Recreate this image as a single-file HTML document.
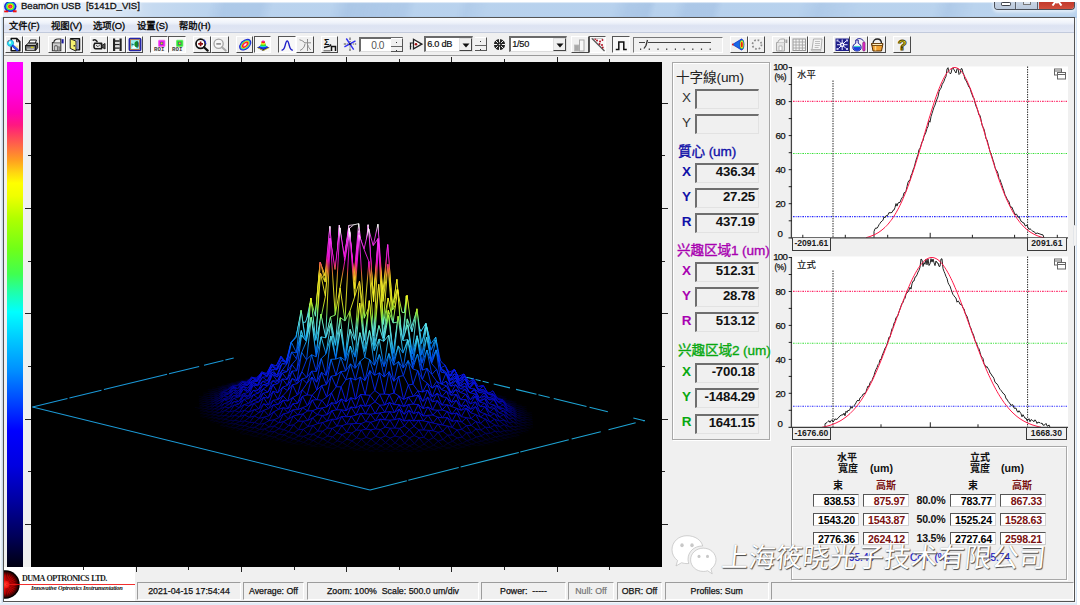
<!DOCTYPE html><html lang="zh"><head><meta charset="utf-8"><title>BeamOn USB [5141D_VIS]</title><style>
*{box-sizing:border-box;margin:0;padding:0}
html,body{width:1080px;height:605px;overflow:hidden;background:#fff}
body{position:relative;font-family:"Liberation Sans","Noto Sans CJK SC",sans-serif;font-size:10px;color:#000;line-height:1}
.a{position:absolute}
.t{position:absolute;white-space:nowrap;line-height:1}
#title{left:2.5px;top:1.7px;width:1074.5px;height:16.3px;background:linear-gradient(180deg,rgba(255,255,255,0.75) 0,rgba(255,255,255,0) 1.6px,rgba(255,255,255,0) 13.5px,rgba(120,150,190,0.18) 16.3px),linear-gradient(105deg,rgba(130,165,210,0) 200px,rgba(130,165,210,0.22) 215px,rgba(130,165,210,0.22) 250px,rgba(130,165,210,0) 262px,rgba(130,165,210,0) 318px,rgba(130,165,210,0.25) 335px,rgba(130,165,210,0.18) 390px,rgba(130,165,210,0) 400px,rgba(130,165,210,0) 440px,rgba(130,165,210,0.15) 450px,rgba(130,165,210,0) 470px,rgba(130,165,210,0) 590px,rgba(130,165,210,0.2) 605px,rgba(130,165,210,0.25) 625px,rgba(130,165,210,0) 632px,rgba(130,165,210,0) 650px,rgba(130,165,210,0.22) 662px,rgba(130,165,210,0.22) 688px,rgba(130,165,210,0) 696px,rgba(130,165,210,0) 770px,rgba(130,165,210,0.18) 790px,rgba(130,165,210,0) 830px,rgba(130,165,210,0) 900px,rgba(130,165,210,0.2) 915px,rgba(130,165,210,0) 940px),linear-gradient(90deg,#e6eef8 0px,#dbe7f5 110px,#c6daf0 150px,#bad3ee 210px,#b7d1ed 700px,#bbd4ee 1074px)}
#frame{left:0;top:17px;width:1077px;height:588px;background:linear-gradient(90deg,#fdfeff 0,#e0eaf5 1.6px,#c2d3e5 3px,#f3f7fc 3.2px);border-right:1px solid #d5e4f4;border-bottom:2px solid #e2ecf7}
#win{left:3px;top:17px;width:1072px;height:585px;background:#f0f0f0;border:1px solid #545454}
#menu{left:4px;top:18px;width:1070px;height:15px;background:linear-gradient(180deg,#fbfcfe 0%,#eef2fa 35%,#dde3f2 55%,#dfe5f3 80%,#e4e9f5 100%);border-bottom:1px solid #c2cadc}
#menu span{position:absolute;top:2.8px;font-size:9.35px;line-height:11px;white-space:nowrap;color:#000;-webkit-text-stroke:0.3px #000}
#tb{left:4px;top:33px;width:1070px;height:23px;background:#f0f0f0;border-bottom:1px solid #9a9a9a}
.btn{position:absolute;top:36px;height:17px;width:18px;border-right:1px solid #4a4a4a;border-bottom:1px solid #4a4a4a;border-left:1px solid #fff;border-top:1px solid #fff}
.btn.dn{border-left:1px solid #555;border-top:1px solid #555;border-right:1px solid #fff;border-bottom:1px solid #fff;background:#f8f8f8}
.btn svg{position:absolute;left:0;top:0}
.sunk{position:absolute;background:#fff;border-top:1px solid #6a6a6a;border-left:1px solid #6a6a6a;border-right:1px solid #dcdcdc;border-bottom:1px solid #dcdcdc}
#plot{left:31px;top:62px;width:631px;height:505px;background:#000}
#cbar{left:7px;top:62px;width:16px;height:505px;background:linear-gradient(180deg,#ff00ff 0%,#ff00e0 6%,#ff00b4 10%,#ff1880 12.5%,#ff4060 14.5%,#ff7040 17%,#ffa020 19.5%,#ffd810 22%,#ffff00 24%,#f0ff00 26.5%,#b0ff00 31%,#70ff18 37%,#40ff50 42%,#20ffa8 45.5%,#00ffff 49.5%,#00c8ff 55%,#0090ff 61%,#0048ff 67%,#0000ff 73%,#0000e0 80%,#0000a0 87%,#000058 94%,#000010 100%)}
.tk{position:absolute;background:#222}
.grp{position:absolute;border:1px solid #a8a8a8;box-shadow:1px 1px 0 #fff, inset 1px 1px 0 #fff}
.fld{position:absolute;left:695px;width:64px;height:20px;margin-top:-1px;border-top:2px solid #6e6e6e;border-left:2px solid #6e6e6e;border-right:1px solid #e2e2e2;border-bottom:1px solid #e2e2e2;background:#f0f0f0;font-weight:bold;font-size:13.2px;line-height:14px;text-align:right;padding-right:3px;color:#111;letter-spacing:-0.2px}
.lab{position:absolute;font-size:13.5px;line-height:16px;width:14px;text-align:center;left:679.5px;margin-top:-1.5px}
.hd{position:absolute;left:676px;font-size:13.6px;line-height:16px;white-space:nowrap;letter-spacing:-0.1px}
.vb{position:absolute;height:13px;width:46px;background:#fff;border-top:1px solid #555;border-left:1px solid #555;border-right:1px solid #cfcfcf;border-bottom:1px solid #cfcfcf;font-weight:bold;font-size:10.6px;line-height:12px;text-align:right;padding-right:3px;letter-spacing:-0.2px}
.pc{position:absolute;font-weight:bold;font-size:10.6px;line-height:12px;width:40px;text-align:center;left:911px;margin-top:1px;letter-spacing:-0.2px;color:#111}
.sb{position:absolute;top:582.2px;height:17.8px;border-top:1px solid #9c9c9c;border-left:1px solid #9c9c9c;border-right:1px solid #fff;border-bottom:1px solid #fff;font-size:8.8px;line-height:17px;text-align:center;white-space:nowrap;color:#111;-webkit-text-stroke:0.25px #111}
.xl{position:absolute;height:12.6px;border:1px solid #3a3a3a;border-top:none;background:#f0f0f0;font-weight:bold;font-size:8.6px;line-height:10.6px;text-align:center;color:#1a1a1a}
</style></head><body>
<div id="frame" class="a"></div>
<div id="title" class="a"></div>
<svg class="a" style="left:4px;top:1.5px" width="13" height="11" viewBox="0 0 13 11"><ellipse cx="6.3" cy="4.6" rx="6.2" ry="5.4" fill="#1c28d8"/><ellipse cx="6.3" cy="4.4" rx="4.6" ry="4.1" fill="#20d8d0"/><ellipse cx="6.3" cy="4.4" rx="3.9" ry="3.5" fill="#40e830"/><ellipse cx="6.3" cy="4.5" rx="3" ry="2.7" fill="#f8e818"/><ellipse cx="6.3" cy="4.6" rx="2.2" ry="2" fill="#f83018"/><ellipse cx="6.5" cy="4.8" rx="1.1" ry="1" fill="#f020c0"/><rect x="0.2" y="8.6" width="4" height="1.7" fill="#f01010"/><rect x="9" y="8.3" width="3.6" height="2" fill="#f01010"/></svg>
<div class="t" style="left:21px;top:0.4px;font-size:9.6px;line-height:12px;letter-spacing:-0.05px;color:#111;-webkit-text-stroke:0.3px #111;text-shadow:0 0 3px #fff,0 0 5px #fff">BeamOn USB&nbsp; [5141D_VIS]</div>
<div class="a" style="left:994px;top:1.5px;width:81px;height:8.5px;border:1px solid #4a4f58;border-top:none;border-radius:0 0 4px 4px;overflow:hidden;background:#c9d6e6;box-shadow:0 1px 3px 1.5px rgba(255,255,255,0.55)"><div class="a" style="left:0;top:0;width:21px;height:10px;background:linear-gradient(180deg,#c8d4e4,#b4c4d8);border-right:1px solid #5a5f68"></div><div class="a" style="left:22px;top:0;width:21px;height:10px;background:linear-gradient(180deg,#c8d4e4,#b4c4d8);border-right:1px solid #5a5f68"></div><div class="a" style="left:44px;top:0;width:36px;height:10px;background:linear-gradient(180deg,#c23a2c,#cf4c3a 60%,#d86c58)"></div><div class="a" style="left:6px;top:0.8px;width:9.5px;height:3.6px;border:1px solid #3c4048;background:#fff;border-radius:1.2px"></div><div class="a" style="left:28px;top:-4px;width:8px;height:7px;border:1px solid #777;background:#dfe7f1"></div><svg class="a" style="left:56px;top:-2px" width="12" height="6" viewBox="0 0 12 6"><path d="M1.5 5.5L5 1M10.5 5.5L7 1M4 0L6 2.5L8 0" stroke="#fff" stroke-width="2" fill="none"/></svg></div>
<div id="win" class="a"></div>
<div class="a" style="left:1073.3px;top:224.5px;width:3.6px;height:21.5px;background:#f3f3f3;border:1px solid #e3e6ea;border-radius:1.5px"></div>
<div id="menu" class="a"><span style="left:5px">文件(F)</span><span style="left:47px">视图(V)</span><span style="left:89px">选项(O)</span><span style="left:133px">设置(S)</span><span style="left:175px">帮助(H)</span></div>
<div id="tb" class="a"></div>
<div class="btn" style="left:5.0px;width:17.6px"><svg width="16" height="15" viewBox="0 0 16 15"><path d="M5.2 1.6h5.6l3 3v9.2h-8.6z" fill="#fbfbf4" stroke="#111" stroke-width="1.5" stroke-linejoin="round"/><path d="M10.5 1.8v3h3" fill="none" stroke="#222" stroke-width="0.9"/><rect x="9.5" y="8.5" width="3" height="4" fill="#f0eaa0"/><circle cx="4.5" cy="6.2" r="3.1" fill="#30e8f0" stroke="#18a8d8" stroke-width="0.9"/><path d="M1.6 5.2a3 3 0 0 1 1.5-2" stroke="#e04040" stroke-width="0.7" fill="none"/><ellipse cx="4" cy="5.6" rx="1" ry="1.5" fill="#d8ffff"/><path d="M6.9 8.8l4.5 4.2" stroke="#1c3ce0" stroke-width="2.5" stroke-linecap="round"/><path d="M7.5 9.1l3.6 3.4" stroke="#40a0f0" stroke-width="0.7" stroke-linecap="round"/></svg></div><div class="btn" style="left:22.9px;width:17.6px"><svg width="16" height="15" viewBox="0 0 16 15"><path d="M4.6 6.2l1.5-3.2h6.3l-1.1 3.2z" fill="#fff" stroke="#1a1a1a" stroke-width="1"/><path d="M1.6 8.6l2.8-2.5h9.2l-2 2.5z" fill="#b4b4b4" stroke="#1a1a1a" stroke-width="1" stroke-linejoin="round"/><path d="M1.6 8.6h10v4.6h-10z" fill="#808080" stroke="#1a1a1a" stroke-width="1.1" stroke-linejoin="round"/><path d="M11.6 8.6l2.1-2.5v4.7l-2.1 2.4z" fill="#5c5c5c" stroke="#1a1a1a" stroke-width="1" stroke-linejoin="round"/><path d="M3 12.2h7" stroke="#d8d8d8" stroke-width="1.1"/><rect x="6.8" y="9.7" width="2.8" height="1.3" fill="#d0c818"/></svg></div><div class="btn" style="left:48.0px;width:17.6px"><svg width="16" height="15" viewBox="0 0 16 15"><path d="M3.4 5.6h8.4v8.2h-8.4z" fill="#cfcfcf" stroke="#3a3a3a" stroke-width="1.1"/><path d="M4.8 5.6c0-2.2 1.7-3.6 4.2-3.6h2.8v3.6" fill="#f0f0f0" stroke="#2a2a2a" stroke-width="1.1"/><path d="M5.8 8.8h2.4v5h-2.4z" fill="#fff" stroke="#444" stroke-width="0.9"/><path d="M9.2 9.8h1.4v4h-1.4z" fill="#eee" stroke="#555" stroke-width="0.7"/><rect x="12.6" y="2.2" width="2" height="4.2" fill="#1c1ca0"/></svg></div><div class="btn" style="left:65.7px;width:17.6px"><svg width="16" height="15" viewBox="0 0 16 15"><path d="M3.2 1.8h9.3v11h-4" fill="#e8e8e8" stroke="#111" stroke-width="1.5" stroke-linejoin="round"/><path d="M9.5 3v9.5h2v-9.5z" fill="#8088b8"/><path d="M3.2 1.8l5.8 2.3v10l-5.8-2.7z" fill="#f4f070" stroke="#222" stroke-width="1" stroke-linejoin="round"/><rect x="6.6" y="8" width="1.5" height="1.5" fill="#333"/></svg></div><div class="btn" style="left:90.2px;width:17.6px"><svg width="16" height="15" viewBox="0 0 16 15"><path d="M1.8 3.6c1.6-1.6 3.8-.6 4.6 1.6" fill="none" stroke="#222" stroke-width="1.5"/><path d="M3.8 6.2h6.8v5.5h-6c-1.6 0-2.4-2.6-.8-5.5z" fill="#e4e4e4" stroke="#1a1a1a" stroke-width="1.6" stroke-linejoin="round"/><path d="M5 8.2l2 1.5 2.5-2.5" fill="none" stroke="#444" stroke-width="0.9"/><path d="M10.8 8.5l3.2-2v5.5l-3.2-2z" fill="#555" stroke="#222" stroke-width="1"/></svg></div><div class="btn" style="left:108.0px;width:17.6px"><svg width="16" height="15" viewBox="0 0 16 15"><rect x="4" y="1.5" width="2.2" height="12.5" fill="#222"/><rect x="10.5" y="1.5" width="2.2" height="12.5" fill="#222"/><path d="M6 4h4.5M6 7.5h4.5M6 11h4.5" stroke="#222" stroke-width="1.5"/><rect x="6.2" y="5" width="4.3" height="1.8" fill="#ddd"/><rect x="6.2" y="8.5" width="4.3" height="1.8" fill="#ddd"/></svg></div><div class="btn" style="left:125.7px;width:17.6px"><svg width="16" height="15" viewBox="0 0 16 15"><rect x="2.3" y="1.6" width="11.4" height="12" rx="1" fill="#98eef0" stroke="#2424a8" stroke-width="1.5"/><rect x="3.4" y="2.7" width="9.2" height="9.8" fill="none" stroke="#c8581c" stroke-width="0.7"/><path d="M4.3 11.5l2.7-3.3 2.7 3.3z" fill="#fff"/><path d="M8 5l2.2-1.2c1.2 1.5 1.2 5.5 0 7l-2.2-1.2c-.8-1.2-.8-3.4 0-4.6z" fill="#148c28"/><path d="M4.5 6.2l2.8 1.3-2.8 1.3z" fill="#1c7c7c"/><path d="M10.6 4.5c1 1.5 1 4.5 0 6" stroke="#102060" stroke-width="0.8" fill="none"/></svg></div><div class="btn dn" style="left:150.0px;width:17.6px"><svg width="16" height="15" viewBox="0 0 16 15"><rect x="7" y="2.7" width="7.4" height="7.2" rx="1.2" fill="#f020f0" opacity="0.55"/><rect x="7.7" y="3.4" width="6" height="5.8" rx="0.6" fill="#f020f0"/><rect x="9.2" y="4.9" width="3" height="2.9" fill="#3c4c8c"/><rect x="9.8" y="5.5" width="1.8" height="1.7" fill="#f0c818"/><text x="3" y="14.3" font-family="'Liberation Mono',monospace" font-size="5.7" font-weight="bold" fill="#3a3a3a" letter-spacing="0.1">ROI</text></svg></div><div class="btn dn" style="left:168.3px;width:17.6px"><svg width="16" height="15" viewBox="0 0 16 15"><rect x="7" y="2.7" width="7.4" height="7.2" rx="1.2" fill="#30e830" opacity="0.55"/><rect x="7.7" y="3.4" width="6" height="5.8" rx="0.6" fill="#30e830"/><rect x="9.2" y="4.9" width="3" height="2.9" fill="#3c4c8c"/><rect x="9.8" y="5.5" width="1.8" height="1.7" fill="#f0c818"/><text x="3" y="14.3" font-family="'Liberation Mono',monospace" font-size="5.7" font-weight="bold" fill="#3a3a3a" letter-spacing="0.1">ROI</text></svg></div><div class="btn" style="left:193.3px;width:17.6px"><svg width="16" height="15" viewBox="0 0 16 15"><circle cx="6.6" cy="6.8" r="4.6" fill="#fff" stroke="#111" stroke-width="1.7"/><path d="M10 10.2l3.7 3.4" stroke="#111" stroke-width="2.2" stroke-linecap="round"/><path d="M4.2 6.8h4.8M6.6 4.4v4.8" stroke="#8c1010" stroke-width="1.7"/><path d="M9.8 2.8a5.4 5.4 0 0 1 2.2 4.4" stroke="#2430d0" stroke-width="1.1" fill="none"/></svg></div><div class="btn" style="left:211.0px;width:17.6px"><svg width="16" height="15" viewBox="0 0 16 15"><circle cx="6.6" cy="6.8" r="4.6" fill="#f6f6f6" stroke="#a4a4a4" stroke-width="1.3"/><path d="M10 10.2l3.7 3.4" stroke="#ababab" stroke-width="2" stroke-linecap="round"/><path d="M4.3 6.9h4.6" stroke="#8a8a8a" stroke-width="1.6"/></svg></div><div class="btn" style="left:235.5px;width:17.6px"><svg width="16" height="15" viewBox="0 0 16 15"><g transform="rotate(-42 8.2 7.7)"><ellipse cx="8.2" cy="7.7" rx="7" ry="4.7" fill="#1c24d0"/><ellipse cx="8.2" cy="7.7" rx="5.9" ry="3.8" fill="#28b0f0"/><ellipse cx="8.2" cy="7.7" rx="5.2" ry="3.2" fill="#50e050"/><ellipse cx="8.2" cy="7.7" rx="4.6" ry="2.7" fill="#f8e020"/><ellipse cx="8.2" cy="7.7" rx="3.9" ry="2.2" fill="#f82020"/><ellipse cx="8.2" cy="7.7" rx="2.6" ry="1.2" fill="#ff60c0"/><ellipse cx="8.2" cy="7.7" rx="1.5" ry="0.6" fill="#fff"/></g></svg></div><div class="btn dn" style="left:253.5px;width:17.6px"><svg width="16" height="15" viewBox="0 0 16 15"><path d="M2 10.6l6-2.6 6.5 2.6-6.5 3.3z" fill="#101070"/><path d="M3 10.8l5.5 2.6 5.5-2.7" stroke="#d8c820" stroke-width="0.8" fill="none"/><path d="M3.2 10.3c2-.8 2.8-1.8 3.3-3.5h3.4c.5 1.7 1.5 2.7 3.5 3.5l-5 2z" fill="#1830e8"/><path d="M4.6 9.4c1-.8 1.4-1.6 1.8-3.2h3.6c.4 1.6.8 2.4 1.8 3.2-2 1-5.2 1-7.2 0z" fill="#20d8d8"/><path d="M5.2 8.4c.6-.8.9-1.5 1.1-2.6h3.8c.2 1.1.5 1.8 1.1 2.6-1.6.8-4.4.8-6 0z" fill="#30e030"/><path d="M5.8 7.2c.4-.7.6-1.3.7-2.2h3.4c.1.9.3 1.5.7 2.2-1.3.6-3.5.6-4.8 0z" fill="#f4ec20"/><path d="M6.3 5.8c.2-.6.3-1.1.4-1.8h3c.1.7.2 1.2.4 1.8-1 .5-2.8.5-3.8 0z" fill="#f42020"/><path d="M6.7 4.2c0-1 3-1 3 0-.8.6-2.2.6-3 0z" fill="#f030d0"/></svg></div><div class="btn dn" style="left:278.0px;width:17.6px"><svg width="16" height="15" viewBox="0 0 16 15"><path d="M2.6 13.2c2.3 0 2.8-1.6 3.5-4.6.6-2.6 1.1-4.6 2.1-4.6s1.5 2 2.1 4.6c.7 3 1.2 4.6 3.5 4.6" fill="none" stroke="#2020c8" stroke-width="1.4"/></svg></div><div class="btn" style="left:296.0px;width:17.6px"><svg width="16" height="15" viewBox="0 0 16 15"><path d="M10.5 2v12M7.5 5.8h6.5M2.5 2.8c2.5.5 4.5 1.8 5.5 3.5M3 13.5c3-1.5 4.5-3.5 5-6.5M13.8 13c-1.5-1.5-2.5-3-3-5" fill="none" stroke="#8c8c8c" stroke-width="1"/></svg></div><div class="btn" style="left:320.6px;width:17.6px"><svg width="16" height="15" viewBox="0 0 16 15"><text x="2" y="8" font-family="'Liberation Sans',sans-serif" font-size="9" font-weight="bold" fill="#111">Σ</text><path d="M2 10.5l6-1.5 1-1.5" stroke="#111" stroke-width="1.4" fill="none"/><path d="M9.5 14v-4.5h4v4.5" stroke="#111" stroke-width="1.5" fill="none"/><path d="M1.5 13.8h7" stroke="#555" stroke-width="1"/></svg></div><div class="btn" style="left:571.0px;width:17.6px"><svg width="16" height="15" viewBox="0 0 16 15"><rect x="2.5" y="8" width="4.5" height="6" fill="#a8a8a8" stroke="#b8b8b8" stroke-width="0.8"/><rect x="7.5" y="3" width="4.5" height="11" fill="#f8f8f8" stroke="#aaa" stroke-width="1"/></svg></div><div class="btn dn" style="left:588.6px;width:17.6px"><svg width="16" height="15" viewBox="0 0 16 15"><path d="M2 1.5l12.5 12.5" stroke="#555" stroke-width="1.2"/><path d="M1.5 1.5h12" stroke="#777" stroke-width="0.8" stroke-dasharray="1 1"/><g fill="#b01020"><circle cx="7" cy="3.5" r="1"/><circle cx="10" cy="4.5" r="1"/><circle cx="12.5" cy="3" r="0.9"/><circle cx="9.5" cy="7" r="1"/><circle cx="12" cy="8" r="1"/><circle cx="12.8" cy="10.5" r="0.9"/><circle cx="5.2" cy="2.2" r="0.8"/></g></svg></div><div class="btn dn" style="left:612.4px;width:17.6px"><svg width="16" height="15" viewBox="0 0 16 15"><path d="M2.8 12.6h3v-7.6h5v7.6h3" fill="none" stroke="#111" stroke-width="1.5"/></svg></div><div class="btn" style="left:730.0px;width:17.6px"><svg width="16" height="15" viewBox="0 0 16 15"><path d="M1.5 7.5l9-5.5c2.5 1 2.5 10 0 11z" fill="#1868e8" stroke="#1030c0" stroke-width="0.8"/><ellipse cx="10.8" cy="7.5" rx="2.6" ry="5.5" fill="#2040d0"/><ellipse cx="10.8" cy="7.5" rx="2" ry="4.6" fill="#38d048"/><ellipse cx="10.8" cy="7.5" rx="1.6" ry="3.8" fill="#f8e020"/><ellipse cx="10.8" cy="7.5" rx="1" ry="2.8" fill="#f02010"/><circle cx="1.8" cy="7.5" r="0.9" fill="#e02020"/></svg></div><div class="btn" style="left:747.6px;width:17.6px"><svg width="16" height="15" viewBox="0 0 16 15"><circle cx="8" cy="7.5" r="4.5" fill="none" stroke="#8a8a8a" stroke-width="1.7" stroke-dasharray="1.7 1.850"/></svg></div><div class="btn" style="left:772.4px;width:17.6px"><svg width="16" height="15" viewBox="0 0 16 15"><path d="M3.5 5.5h8v8.5h-8z" fill="#e4e4e4" stroke="#a8a8a8" stroke-width="1"/><path d="M5 5.5c0-2 1.5-3.5 4-3.5h2.5v3.5" fill="#f0f0f0" stroke="#a8a8a8" stroke-width="1"/><path d="M6 9h3v4.5h-3z" fill="#fff" stroke="#b0b0b0" stroke-width="0.9"/><rect x="12.5" y="2.5" width="1.8" height="3.5" fill="#a0a0a0"/></svg></div><div class="btn" style="left:790.0px;width:17.6px"><svg width="16" height="15" viewBox="0 0 16 15"><rect x="2" y="2" width="12.5" height="11.5" fill="#f4f4f4" stroke="#9a9a9a" stroke-width="1"/><path d="M2 5h12.5M2 8h12.5M2 11h12.5M5 2v11.5M8.2 2v11.5M11.4 2v11.5" stroke="#a4a4a4" stroke-width="0.9"/></svg></div><div class="btn" style="left:807.8px;width:17.6px"><svg width="16" height="15" viewBox="0 0 16 15"><path d="M4.5 2h8.5l-1 10.5h-9z" fill="#f4f4f4" stroke="#b0b0b0" stroke-width="1"/><path d="M2 12.5h9.5l.5 1.5h-9z" fill="#e0e0e0" stroke="#b0b0b0" stroke-width="0.8"/><path d="M6 4.5h5M6 6.5h5M5.8 8.5h5M5.6 10.5h4" stroke="#b8b8b8" stroke-width="0.9"/></svg></div><div class="btn" style="left:832.5px;width:17.6px"><svg width="16" height="15" viewBox="0 0 16 15"><rect x="1.5" y="1.5" width="13.5" height="12.5" fill="#20208c"/><g stroke="#e8e8ff" stroke-width="1" fill="none"><path d="M8.2 2.5v10.5M3 7.7h10.5M4.5 4l7.5 7.5M12 4l-7.5 7.5"/></g><circle cx="8.2" cy="7.7" r="2.2" fill="#fff"/><circle cx="8.2" cy="7.7" r="1" fill="#4040b0"/><g fill="#c8c8f0"><rect x="2.5" y="2.5" width="2" height="2"/><rect x="12" y="2.5" width="2" height="2"/><rect x="2.5" y="11" width="2" height="2"/><rect x="12" y="11" width="2" height="2"/></g></svg></div><div class="btn" style="left:850.3px;width:17.6px"><svg width="16" height="15" viewBox="0 0 16 15"><path d="M5.5 2.5c2-1.5 5-1.5 7.5 2" fill="none" stroke="#3030a0" stroke-width="1"/><path d="M4.8 3h2.4v3.2c2 1 3 2.5 3 4.3 0 2-1.8 3.5-4.2 3.5s-4.2-1.5-4.2-3.5c0-1.8 1-3.3 3-4.3z" fill="#f4f4ff" stroke="#181890" stroke-width="1"/><path d="M2.2 9.5h7.6c.3 2.5-1.3 4.2-3.8 4.2s-4.1-1.7-3.8-4.2z" fill="#1840e0"/><path d="M3 9.5h6" stroke="#40d0c0" stroke-width="1.2"/><rect x="11.8" y="5" width="2.2" height="9" rx="1" fill="#f030d0" stroke="#701070" stroke-width="0.7"/></svg></div><div class="btn" style="left:868.2px;width:17.6px"><svg width="16" height="15" viewBox="0 0 16 15"><path d="M4 6.5c0-6 8.5-6 8.5 0" fill="none" stroke="#222" stroke-width="1.3"/><path d="M2.5 6.5h11.5l-1.5 7.5h-8.5z" fill="#f0a030" stroke="#5a3000" stroke-width="1"/><path d="M3 6.5h10.5v2h-10.5z" fill="#fff0c0" stroke="#5a3000" stroke-width="0.8"/><path d="M6.5 9v4.5" stroke="#ffd890" stroke-width="1.5"/></svg></div><div class="btn" style="left:893.3px;width:17.6px"><svg width="16" height="15" viewBox="0 0 16 15"><text x="8.3" y="13.3" text-anchor="middle" font-family="'Liberation Sans',sans-serif" font-size="15" font-weight="bold" fill="#e8d820" stroke="#4a4000" stroke-width="0.9">?</text></svg></div><svg class="a" style="left:343px;top:37px" width="14" height="15" viewBox="0 0 14 15"><path d="M7 0.5v13.5M0.8 7h12.4" stroke="#333" stroke-width="0.9" stroke-dasharray="2.5 1 1 1"/><path d="M3.3 1.5L10.7 12.6M1.4 9.8L12.5 3.8" stroke="#3030f0" stroke-width="1.4"/><rect x="6.2" y="6.2" width="1.6" height="1.6" fill="#111"/></svg><div class="sunk" style="left:359.2px;top:37px;width:43.6px;height:15.2px;border-top-width:2px;border-left-width:2px"></div><div class="t" style="left:362px;top:40.8px;width:22px;text-align:right;font-size:10.2px;color:#555;letter-spacing:-0.5px">0.0</div><div class="a" style="left:390.6px;top:37.6px;width:12px;height:14.4px;border-right:1px solid #555;border-bottom:1.3px solid #555;border-top:1px solid #fff;background:#f0f0f0"><div class="a" style="left:0;top:7px;width:11px;height:1.5px;background:#666"></div><div class="a" style="left:5px;top:3px;width:1.5px;height:1.5px;background:#333"></div><div class="a" style="left:5px;top:11px;width:1.5px;height:1.5px;background:#333"></div></div><svg class="a" style="left:409px;top:37px" width="14" height="15" viewBox="0 0 14 15"><path d="M4.5 2.3l8.3 4.8-8.3 4.8z" fill="#fff" stroke="#222" stroke-width="1.3"/><path d="M0.8 6h3.5M1.5 6v6.5M0.8 9.5h1.5" stroke="#222" stroke-width="1.2" fill="none"/><circle cx="7" cy="7.2" r="1.3" fill="#a01010"/></svg><div class="sunk" style="left:423.7px;top:36.3px;width:49px;height:15.8px;border-top-width:2px;border-left-width:2px"></div><div class="t" style="left:427.3px;top:40px;font-size:9.2px;color:#111;letter-spacing:-0.3px;-webkit-text-stroke:0.2px #111">6.0 dB</div><div class="a" style="left:459.0px;top:38px;width:12.5px;height:13px;background:#f0f0f0;border-right:1px solid #444;border-bottom:1px solid #444;border-left:1px solid #e0e0e0;border-top:1px solid #e0e0e0"><svg class="a" style="left:2px;top:3.5px" width="8" height="5" viewBox="0 0 8 5"><path d="M0.5 0.5h7l-3.5 4z" fill="#111"/></svg></div><div class="a" style="left:474.5px;top:36.8px;width:12px;height:14.4px;border-right:1px solid #555;border-bottom:1.3px solid #555;border-top:1px solid #fff;background:#f0f0f0"><div class="a" style="left:0;top:7px;width:11px;height:1.5px;background:#666"></div><div class="a" style="left:5px;top:3px;width:1.5px;height:1.5px;background:#333"></div><div class="a" style="left:5px;top:11px;width:1.5px;height:1.5px;background:#333"></div></div><svg class="a" style="left:492.5px;top:37.5px" width="13" height="13" viewBox="0 0 13 13"><circle cx="6.5" cy="6.5" r="5.6" fill="#222"/><g stroke="#f0f0f0" stroke-width="1"><path d="M6.5 0.5v12M0.5 6.5h12M2.3 2.3l8.4 8.4M10.7 2.3l-8.4 8.4"/></g><circle cx="6.5" cy="6.5" r="2.3" fill="#222"/><circle cx="6.5" cy="6.5" r="0.8" fill="#ddd"/></svg><div class="sunk" style="left:508.7px;top:36.3px;width:58px;height:15.8px;border-top-width:2px;border-left-width:2px"></div><div class="t" style="left:512.3px;top:40px;font-size:9.2px;color:#111;letter-spacing:-0.3px;-webkit-text-stroke:0.2px #111">1/50</div><div class="a" style="left:553.0px;top:38px;width:12.5px;height:13px;background:#f0f0f0;border-right:1px solid #444;border-bottom:1px solid #444;border-left:1px solid #e0e0e0;border-top:1px solid #e0e0e0"><svg class="a" style="left:2px;top:3.5px" width="8" height="5" viewBox="0 0 8 5"><path d="M0.5 0.5h7l-3.5 4z" fill="#111"/></svg></div><div class="a" style="left:632.5px;top:37px;width:90px;height:16px;border-top:1px solid #777;border-left:1px solid #777;border-right:1px solid #fff;border-bottom:1px solid #fff"></div><svg class="a" style="left:632px;top:37px" width="91" height="16" viewBox="0 0 91 16"><path d="M7 5.5h6M16 5.5h63" stroke="#444" stroke-width="1.2"/><path d="M15.5 3l-1.5 5.5-2 3" stroke="#333" stroke-width="1.3" fill="none"/><rect x="8.0" y="11.5" width="1.2" height="1.4" fill="#333"/><rect x="16.7" y="11.5" width="1.2" height="1.4" fill="#333"/><rect x="25.4" y="11.5" width="1.2" height="1.4" fill="#333"/><rect x="34.1" y="11.5" width="1.2" height="1.4" fill="#333"/><rect x="42.8" y="11.5" width="1.2" height="1.4" fill="#333"/><rect x="51.5" y="11.5" width="1.2" height="1.4" fill="#333"/><rect x="60.2" y="11.5" width="1.2" height="1.4" fill="#333"/><rect x="68.9" y="11.5" width="1.2" height="1.4" fill="#333"/><rect x="77.6" y="11.5" width="1.2" height="1.4" fill="#333"/></svg>
<div id="cbar" class="a"></div>
<div id="plot" class="a"></div>
<div class="tk" style="left:25px;top:102.5px;width:6px;height:1px"></div>
<div class="tk" style="left:662px;top:102.5px;width:6px;height:1px"></div>
<div class="tk" style="left:28px;top:155.2px;width:3px;height:1px"></div>
<div class="tk" style="left:662px;top:155.2px;width:3px;height:1px"></div>
<div class="tk" style="left:25px;top:207.9px;width:6px;height:1px"></div>
<div class="tk" style="left:662px;top:207.9px;width:6px;height:1px"></div>
<div class="tk" style="left:28px;top:260.6px;width:3px;height:1px"></div>
<div class="tk" style="left:662px;top:260.6px;width:3px;height:1px"></div>
<div class="tk" style="left:25px;top:313.3px;width:6px;height:1px"></div>
<div class="tk" style="left:662px;top:313.3px;width:6px;height:1px"></div>
<div class="tk" style="left:28px;top:366.0px;width:3px;height:1px"></div>
<div class="tk" style="left:662px;top:366.0px;width:3px;height:1px"></div>
<div class="tk" style="left:25px;top:418.7px;width:6px;height:1px"></div>
<div class="tk" style="left:662px;top:418.7px;width:6px;height:1px"></div>
<div class="tk" style="left:28px;top:471.4px;width:3px;height:1px"></div>
<div class="tk" style="left:662px;top:471.4px;width:3px;height:1px"></div>
<div class="tk" style="left:25px;top:524.1px;width:6px;height:1px"></div>
<div class="tk" style="left:662px;top:524.1px;width:6px;height:1px"></div>
<div class="tk" style="left:83.1px;top:59px;width:1px;height:3px"></div>
<div class="tk" style="left:83.1px;top:567px;width:1px;height:3px"></div>
<div class="tk" style="left:135.7px;top:57px;width:1px;height:5px"></div>
<div class="tk" style="left:135.7px;top:567px;width:1px;height:5px"></div>
<div class="tk" style="left:188.3px;top:59px;width:1px;height:3px"></div>
<div class="tk" style="left:188.3px;top:567px;width:1px;height:3px"></div>
<div class="tk" style="left:240.9px;top:57px;width:1px;height:5px"></div>
<div class="tk" style="left:240.9px;top:567px;width:1px;height:5px"></div>
<div class="tk" style="left:293.5px;top:59px;width:1px;height:3px"></div>
<div class="tk" style="left:293.5px;top:567px;width:1px;height:3px"></div>
<div class="tk" style="left:346.1px;top:57px;width:1px;height:5px"></div>
<div class="tk" style="left:346.1px;top:567px;width:1px;height:5px"></div>
<div class="tk" style="left:398.7px;top:59px;width:1px;height:3px"></div>
<div class="tk" style="left:398.7px;top:567px;width:1px;height:3px"></div>
<div class="tk" style="left:451.3px;top:57px;width:1px;height:5px"></div>
<div class="tk" style="left:451.3px;top:567px;width:1px;height:5px"></div>
<div class="tk" style="left:503.9px;top:59px;width:1px;height:3px"></div>
<div class="tk" style="left:503.9px;top:567px;width:1px;height:3px"></div>
<div class="tk" style="left:556.5px;top:57px;width:1px;height:5px"></div>
<div class="tk" style="left:556.5px;top:567px;width:1px;height:5px"></div>
<div class="tk" style="left:609.1px;top:59px;width:1px;height:3px"></div>
<div class="tk" style="left:609.1px;top:567px;width:1px;height:3px"></div>
<svg class="a" style="left:0;top:0" width="1080" height="605" viewBox="0 0 1080 605"><clipPath id="pc"><rect x="31" y="62" width="631" height="505"/></clipPath><g clip-path="url(#pc)">
<defs><linearGradient id="mg" gradientUnits="userSpaceOnUse" x1="0" y1="-190" x2="0" y2="0"><stop offset="0.000" stop-color="#ffffff"/><stop offset="0.015" stop-color="#ffffff"/><stop offset="0.060" stop-color="#ff3cff"/><stop offset="0.170" stop-color="#ff14e6"/><stop offset="0.195" stop-color="#ff2896"/><stop offset="0.220" stop-color="#ff6e46"/><stop offset="0.250" stop-color="#ffb428"/><stop offset="0.280" stop-color="#fff028"/><stop offset="0.375" stop-color="#faff28"/><stop offset="0.410" stop-color="#d7ff28"/><stop offset="0.445" stop-color="#96ff50"/><stop offset="0.480" stop-color="#6effc8"/><stop offset="0.525" stop-color="#60f0fa"/><stop offset="0.580" stop-color="#28c8ff"/><stop offset="0.630" stop-color="#007cff"/><stop offset="0.690" stop-color="#003cff"/><stop offset="0.800" stop-color="#0818fa"/><stop offset="0.880" stop-color="#060cde"/><stop offset="0.940" stop-color="#0204a5"/><stop offset="0.970" stop-color="#000069"/><stop offset="0.992" stop-color="#00001e"/><stop offset="1.000" stop-color="#000000"/></linearGradient></defs><g fill="#000" stroke="url(#mg)" stroke-width="0.85" stroke-linejoin="round"><path transform="translate(0 373.1)" d="M293 -1L297.9 -0.3 302.6 -1.1 307.5 -0.5 312.2 -1.2 317.1 -0.6 321.8 -1.2 326.7 -0.6 331.4 -1.4 336.3 -0.7 341 -1.3 345.9 -0.7 350.6 -1.3 355.5 -0.6 360.2 -1.1 365.1 -0.4 369.8 -0.9 374.7 -0.2 379.4 -0.7 379.4 1.5 293 1.5z"/><path transform="translate(0 374.3)" d="M288.3 -1.3L293.2 -0.4 297.9 -1.5 302.8 -0.8 307.5 -1.7 312.4 -1.1 317.1 -1.8 322 -1.6 326.7 -1.8 331.6 -1.4 336.3 -1.9 341.2 -1.4 345.9 -1.9 350.8 -1.2 355.5 -1.9 360.4 -0.8 365.1 -1.6 370 -0.6 374.7 -1.4 379.6 -0.4 384.3 -1.1 384.3 1.5 288.3 1.5z"/><path transform="translate(0 375.5)" d="M274 -1.1L278.9 -0.8 283.6 -1.4 288.5 -1.5 293.2 -1.7 298.1 -2.3 302.8 -2 307.7 -2.9 312.4 -2.3 317.3 -3.3 322 -2.8 326.9 -3.9 331.6 -2.6 336.5 -4.5 341.2 -2.6 346.1 -3.9 350.8 -2.4 355.7 -3.4 360.4 -2 365.3 -2.5 370 -1.8 374.9 -1.5 379.6 -1.6 384.5 -1 389.2 -1.4 394.1 -0.6 398.8 -0.9 398.8 1.5 274 1.5z"/><path transform="translate(0 376.8)" d="M259.7 -1.1L264.6 -0.2 269.3 -1.3 274.2 -0.8 278.9 -2 283.8 -2.1 288.5 -2.7 293.4 -2.5 298.1 -3.5 303 -3.5 307.7 -4.1 312.6 -4.1 317.3 -4.5 322.2 -4.4 326.9 -5.2 331.8 -5.3 336.5 -5.7 341.4 -4.8 346.1 -5.1 351 -4.5 355.7 -4.6 360.6 -4.6 365.3 -3.8 370.2 -3.2 374.9 -2.7 379.8 -2.1 384.5 -2.2 389.4 -1.2 394.1 -1.9 399 -0.6 403.7 -1.4 408.6 -0.3 413.3 -0.8 413.3 1.5 259.7 1.5z"/><path transform="translate(0 378)" d="M255 -1L259.9 -0.7 264.6 -1.4 269.5 -1.8 274.2 -2 279.1 -3.2 283.8 -3.3 288.7 -4.5 293.4 -3.7 298.3 -5.6 303 -4.7 307.9 -6.4 312.6 -5.3 317.5 -8.1 322.2 -5.6 327.1 -8.1 331.8 -6.5 336.7 -8.3 341.4 -6 346.3 -8.7 351 -5.7 355.9 -7.9 360.6 -5.8 365.5 -7.7 370.2 -4.4 375.1 -6.3 379.8 -3.4 384.7 -4.9 389.4 -2.4 394.3 -2.9 399 -1.9 403.9 -1.5 408.6 -1.5 413.5 -0.8 418.2 -1 418.2 1.5 255 1.5z"/><path transform="translate(0 379.2)" d="M250.3 -1.2L255.2 -0.7 259.9 -1.9 264.8 -2 269.5 -3 274.4 -3.1 279.1 -4.4 284 -4.2 288.7 -5.7 293.6 -5.2 298.3 -6.8 303.2 -6.2 307.9 -7.6 312.8 -7.1 317.5 -9.3 322.4 -8.7 327.1 -9.3 332 -8.8 336.7 -9.6 341.6 -8.9 346.3 -9.9 351.2 -8 355.9 -9.1 360.8 -8.1 365.5 -8.9 370.4 -7.6 375.1 -7.6 380 -7.1 384.7 -6.1 389.6 -4.9 394.3 -4.1 399.2 -3.6 403.9 -2.7 408.8 -1.8 413.5 -2 418.4 -0.8 423.1 -1.4 428 -0.3 432.7 -0.6 432.7 1.5 250.3 1.5z"/><path transform="translate(0 380.4)" d="M245.6 -1.2L250.5 -1.3 255.2 -1.9 260.1 -2.6 264.8 -3.3 269.7 -4.5 274.4 -4.3 279.3 -6.2 284 -5.4 288.9 -8.2 293.6 -6.4 298.5 -9.8 303.2 -7.4 308.1 -11.7 312.8 -8.3 317.7 -12.6 322.4 -9.9 327.3 -14.2 332 -10 336.9 -13.1 341.6 -10.1 346.5 -14 351.2 -9.2 356.1 -13.9 360.8 -9.3 365.7 -12.1 370.4 -8.8 375.3 -11.4 380 -8.4 384.9 -10.5 389.6 -6.1 394.5 -9.2 399.2 -4.8 404.1 -6.2 408.8 -3 413.7 -3.4 418.4 -2 423.3 -1.4 428 -1.5 432.9 -0.8 437.6 -0.8 437.6 1.5 245.6 1.5z"/><path transform="translate(0 381.7)" d="M240.9 -1.4L245.8 -1.2 250.5 -2.6 255.4 -2.4 260.1 -3.9 265 -4.1 269.7 -5.7 274.6 -5.2 279.3 -7.4 284.2 -7 288.9 -9.4 293.8 -8.8 298.5 -11 303.4 -10.4 308.1 -12.9 313 -11.6 317.7 -13.8 322.6 -13 327.3 -15.4 332.2 -12.2 336.9 -14.4 341.8 -13.4 346.5 -15.2 351.4 -12.8 356.1 -15.1 361 -12.9 365.7 -13.3 370.6 -12.7 375.3 -12.6 380.2 -11.7 384.9 -11.8 389.8 -8.8 394.5 -10.5 399.4 -7.9 404.1 -7.4 409 -5.6 413.7 -4.6 418.6 -3.5 423.3 -2.7 428.2 -1.4 432.9 -2 437.8 -0.5 442.5 -1.1 442.5 1.5 240.9 1.5z"/><path transform="translate(0 382.9)" d="M236.2 -1.3L241.1 -1.7 245.8 -2.4 250.7 -3.4 255.4 -3.7 260.3 -5 265 -5.3 269.9 -7.2 274.6 -6.4 279.5 -10 284.2 -8.3 289.1 -12.5 293.8 -10.1 298.7 -15.3 303.4 -11.7 308.3 -16.4 313 -12.8 317.9 -17.5 322.6 -14.2 327.5 -18.5 332.2 -13.5 337.1 -18.8 341.8 -14.6 346.7 -20.6 351.4 -14.1 356.3 -20.2 361 -14.2 365.9 -20.4 370.6 -14 375.5 -17 380.2 -13 385.1 -15.9 389.8 -10.1 394.7 -13.6 399.4 -9.1 404.3 -11.9 409 -6.8 413.9 -9.1 418.6 -4.7 423.5 -5.6 428.2 -2.6 433.1 -2.3 437.8 -1.7 442.7 -1.1 447.4 -1.1 447.4 1.5 236.2 1.5z"/><path transform="translate(0 384.1)" d="M231.5 -1.3L236.4 -1 241.1 -2.9 246 -2.5 250.7 -4.7 255.6 -4.1 260.3 -6.2 265.2 -5.9 269.9 -8.4 274.8 -8.8 279.5 -11.2 284.4 -10.6 289.1 -13.7 294 -12.3 298.7 -16.5 303.6 -15.4 308.3 -17.6 313.2 -15.6 317.9 -18.7 322.8 -16.6 327.5 -19.7 332.4 -17.5 337.1 -20.1 342 -17.6 346.7 -21.8 351.6 -18.1 356.3 -21.5 361.2 -18.2 365.9 -21.6 370.8 -18.5 375.5 -18.2 380.4 -14.8 385.1 -17.2 390 -15.3 394.7 -14.8 399.6 -12 404.3 -13.1 409.2 -10.5 413.9 -10.4 418.8 -8.4 423.5 -6.8 428.4 -5 433.1 -3.5 438 -2.7 442.7 -2.3 447.6 -0.8 452.3 -1.4 452.3 1.5 231.5 1.5z"/><path transform="translate(0 385.3)" d="M226.8 -1.1L231.7 -1.5 236.4 -2.3 241.3 -3.2 246 -3.7 250.9 -4.7 255.6 -5.3 260.5 -8 265.2 -7.1 270.1 -11.5 274.8 -10 279.7 -14.7 284.4 -11.9 289.3 -16.9 294 -13.5 298.9 -19.7 303.6 -16.6 308.5 -21.8 313.2 -16.9 318.1 -22.4 322.8 -17.8 327.7 -25.4 332.4 -18.7 337.3 -25.6 342 -18.9 346.9 -26.9 351.6 -19.3 356.5 -25.6 361.2 -19.5 366.1 -25.2 370.8 -19.7 375.7 -24.5 380.4 -16 385.3 -22 390 -16.6 394.9 -21.7 399.6 -13.3 404.5 -17.5 409.2 -11.8 414.1 -14.1 418.8 -9.6 423.7 -11.9 428.4 -6.2 433.3 -7.6 438 -3.9 442.9 -4 447.6 -2 452.5 -1.4 457.2 -1.3 462.1 -0.3 466.8 -0.6 466.8 1.5 226.8 1.5z"/><path transform="translate(0 386.5)" d="M222.1 -1.2L227 -1 231.7 -2.7 236.6 -2.3 241.3 -4.4 246.2 -3.9 250.9 -5.9 255.8 -6.9 260.5 -9.2 265.4 -9.5 270.1 -12.7 275 -12.7 279.7 -16 284.6 -14.3 289.3 -18.1 294.2 -16.4 298.9 -21 303.8 -19.6 308.5 -23 313.4 -20.1 318.1 -23.7 323 -22.2 327.7 -26.6 332.6 -21.4 337.3 -26.9 342.2 -22.8 346.9 -28.1 351.8 -24 356.5 -26.8 361.4 -23.8 366.1 -26.4 371 -22.7 375.7 -25.7 380.6 -22.4 385.3 -23.2 390.2 -18.1 394.9 -23 399.8 -17.2 404.5 -18.7 409.4 -14.7 414.1 -15.4 419 -12.1 423.7 -13.1 428.6 -9.1 433.3 -8.8 438.2 -7.6 442.9 -5.3 447.8 -3.4 452.5 -2.6 457.4 -1.1 462.1 -1.5 467 -0.2 471.7 -0.6 471.7 1.5 222.1 1.5z"/><path transform="translate(0 387.8)" d="M217.4 -1L222.3 -0.9 227 -2.2 231.9 -2.8 236.6 -3.5 241.5 -4.5 246.2 -5.1 251.1 -9.2 255.8 -8.1 260.7 -11.9 265.4 -10.8 270.3 -16.4 275 -13.9 279.9 -18.8 284.6 -15.5 289.5 -21.3 294.2 -17.6 299.1 -26.1 303.8 -20.8 308.7 -24.4 313.4 -21.3 318.3 -29.2 323 -23.4 327.9 -28.7 332.6 -22.7 337.5 -30 342.2 -24 347.1 -31.5 351.8 -25.2 356.7 -31.6 361.4 -25 366.3 -28.2 371 -23.9 375.9 -28.7 380.6 -23.6 385.5 -28.6 390.2 -19.3 395.1 -24.3 399.8 -18.5 404.7 -23.2 409.4 -15.9 414.3 -20.4 419 -13.3 423.9 -17.5 428.6 -10.3 433.5 -12.5 438.2 -8.8 443.1 -8.9 447.8 -4.6 452.7 -4.7 457.4 -2.3 462.3 -1.5 467 -1.4 471.9 -0.3 476.6 -0.6 476.6 1.5 217.4 1.5z"/><path transform="translate(0 389)" d="M212.7 -1L217.6 -0.4 222.3 -2.1 227.2 -1.8 231.9 -4 236.8 -3.8 241.5 -5.7 246.4 -7 251.1 -10.5 256 -10.5 260.7 -13.2 265.6 -12.1 270.3 -17.6 275.2 -15.2 279.9 -20 284.8 -18.8 289.5 -22.5 294.4 -20.1 299.1 -27.3 304 -21.2 308.7 -25.6 313.6 -25.3 318.3 -30.5 323.2 -25.1 327.9 -29.9 332.8 -28.1 337.5 -31.3 342.4 -26.4 347.1 -32.7 352 -27.5 356.7 -32.8 361.6 -27.7 366.3 -29.4 371.2 -27.3 375.9 -29.9 380.8 -25.1 385.5 -29.8 390.4 -22.6 395.1 -25.5 400 -22.6 404.7 -24.4 409.6 -18.7 414.3 -21.7 419.2 -18.4 423.9 -18.7 428.8 -14.2 433.5 -13.8 438.4 -10.9 443.1 -10.2 448 -8.4 452.7 -5.9 457.6 -3.8 462.3 -2.8 467.2 -1.1 471.9 -1.6 476.8 -0.2 476.8 1.5 212.7 1.5z"/><path transform="translate(0 390.2)" d="M208 -0.8L212.9 -0.3 217.6 -1.6 222.5 -2.2 227.2 -3 232.1 -3.6 236.8 -5 241.7 -7.8 246.4 -8.2 251.3 -12.1 256 -11.7 260.9 -16.8 265.6 -13.3 270.5 -20 275.2 -16.4 280.1 -21.8 284.8 -20 289.7 -25.1 294.4 -21.3 299.3 -30 304 -22.4 308.9 -32.1 313.6 -26.6 318.5 -32.1 323.2 -26.3 328.1 -36.8 332.8 -29.3 337.7 -37.7 342.4 -27.6 347.3 -35.4 352 -28.8 356.9 -37.7 361.6 -28.9 366.5 -34 371.2 -28.5 376.1 -36.5 380.8 -26.3 385.7 -32 390.4 -23.8 395.3 -30.3 400 -23.8 404.9 -28.4 409.6 -20 414.5 -24.9 419.2 -19.6 424.1 -23.5 428.8 -15.5 433.7 -19.2 438.4 -12.2 443.3 -15.3 448 -9.6 452.9 -10 457.6 -5 462.5 -4.8 467.2 -2.3 472.1 -1.6 476.8 -1.4 481.7 -0.3 486.4 -0.6 486.4 1.5 208 1.5z"/><path transform="translate(0 391.4)" d="M208.2 0.2L212.9 -1.5 217.8 -1.1 222.5 -3.4 227.4 -2.6 232.1 -4.8 237 -5.5 241.7 -9 246.6 -8.1 251.3 -13.4 256.2 -13.4 260.9 -18.1 265.8 -17 270.5 -21.3 275.4 -20.1 280.1 -23 285 -21.1 289.7 -26.3 294.6 -24.4 299.3 -31.2 304.2 -26.2 308.9 -33.3 313.8 -32.3 318.5 -33.3 323.4 -31.7 328.1 -38 333 -35.6 337.7 -38.9 342.6 -33.5 347.3 -36.6 352.2 -32.4 356.9 -38.9 361.8 -33.6 366.5 -35.2 371.4 -31.1 376.1 -37.7 381 -29.5 385.7 -33.3 390.6 -27.6 395.3 -31.5 400.2 -26.3 404.9 -29.6 409.8 -22.7 414.5 -26.2 419.4 -20.4 424.1 -24.7 429 -18.6 433.7 -20.5 438.6 -16.1 443.3 -16.6 448.2 -11.5 452.9 -11.2 457.8 -8.4 462.5 -6 467.4 -3.4 472.1 -2.8 477 -1 481.7 -1.5 486.6 0 486.6 1.5 208.2 1.5z"/><path transform="translate(0 392.6)" d="M208.2 -1L213.1 -1 217.8 -2.3 222.7 -2.7 227.4 -3.8 232.3 -6.7 237 -6.7 241.9 -10.2 246.6 -9.3 251.5 -15.2 256.2 -14.6 261.1 -17.7 265.8 -18.2 270.7 -23.7 275.4 -21.3 280.3 -27.7 285 -22.3 289.9 -30 294.6 -25.6 299.5 -32.3 304.2 -27.4 309.1 -37.7 313.8 -33.5 318.7 -45.1 323.4 -32.9 328.3 -47.4 333 -36.8 337.9 -52.8 342.6 -34.7 347.5 -51.2 352.2 -33.6 357.1 -48.3 361.8 -34.8 366.7 -45.4 371.4 -32.3 376.3 -41.2 381 -30.7 385.9 -39.6 390.6 -28.8 395.5 -37.8 400.2 -27.5 405.1 -32.8 409.8 -23.9 414.7 -29.3 419.4 -21.6 424.3 -28.6 429 -19.8 433.9 -24.6 438.6 -17.3 443.5 -20.5 448.2 -12.7 453.1 -16 457.8 -9.6 462.7 -9.9 467.4 -4.6 472.3 -4.7 477 -2.2 481.9 -1.4 486.6 -1.2 486.6 1.5 208.2 1.5z"/><path transform="translate(0 393.9)" d="M203.5 -0.8L208.4 -0.4 213.1 -2.2 218 -1.6 222.7 -3.9 227.6 -4.2 232.3 -8 237.2 -7.6 241.9 -11.4 246.8 -11.5 251.5 -16.4 256.4 -14.1 261.1 -18.9 266 -16.6 270.7 -24.9 275.6 -19.7 280.3 -28.9 285.2 -25.8 289.9 -31.2 294.8 -27.3 299.5 -33.6 304.4 -35.1 309.1 -39 314 -39.7 318.7 -46.3 323.6 -42.2 328.3 -48.6 333.2 -49 337.9 -54 342.8 -48.9 347.5 -52.4 352.4 -53.1 357.1 -49.5 362 -48.7 366.7 -46.6 371.6 -45.2 376.3 -42.4 381.2 -39.3 385.9 -40.8 390.8 -34.4 395.5 -39 400.4 -32 405.1 -34 410 -29.4 414.7 -30.5 419.6 -24.1 424.3 -29.8 429.2 -22.3 433.9 -25.8 438.8 -20.7 443.5 -21.7 448.4 -15.9 453.1 -17.2 458 -11.1 462.7 -11.2 467.6 -8.1 472.3 -5.9 477.2 -3.3 481.9 -2.7 486.8 -0.9 491.5 -1.2 491.5 1.5 203.5 1.5z"/><path transform="translate(0 395.1)" d="M203.7 -0.1L208.4 -1.6 213.3 -1.8 218 -2.9 222.9 -3.8 227.6 -5.5 232.5 -8.4 237.2 -8.8 242.1 -13.5 246.8 -12.8 251.7 -18.1 256.4 -15.3 261.3 -21.3 266 -17.9 270.9 -26.7 275.6 -21 280.5 -32.7 285.2 -27 290.1 -37.6 294.8 -28.5 299.7 -42.8 304.4 -36.3 309.3 -49.1 314 -40.9 318.9 -52.5 323.6 -43.4 328.5 -58.7 333.2 -50.3 338.1 -59.3 342.8 -50.1 347.7 -59.8 352.4 -54.3 357.3 -60.4 362 -49.9 366.9 -60.7 371.6 -46.4 376.5 -59 381.2 -40.5 386.1 -47.1 390.8 -35.6 395.7 -44 400.4 -33.2 405.3 -38 410 -30.7 414.9 -34 419.6 -25.4 424.5 -32.2 429.2 -23.5 434.1 -27 438.8 -21.9 443.7 -24.4 448.4 -17.2 453.3 -20.9 458 -12.3 462.9 -13.6 467.6 -9.4 472.5 -8.6 477.2 -4.5 482.1 -3.2 486.8 -2.1 491.7 -1.1 496.4 -0.9 496.4 1.5 203.7 1.5z"/><path transform="translate(0 396.3)" d="M203.7 -1.3L208.6 -0.7 213.3 -3 218.2 -2.2 222.9 -5 227.8 -6.3 232.5 -9.6 237.4 -10.5 242.1 -14.7 247 -13.3 251.7 -19.3 256.6 -17.1 261.3 -22.5 266.2 -20.3 270.9 -27.9 275.8 -24 280.5 -33.9 285.4 -32.5 290.1 -38.8 295 -35.8 299.7 -44 304.6 -43.9 309.3 -50.3 314.2 -43.2 318.9 -53.7 323.8 -48.5 328.5 -59.9 333.4 -50.2 338.1 -60.5 343 -54.3 347.7 -61 352.6 -60.7 357.3 -61.6 362.2 -52.8 366.9 -61.9 371.8 -52.4 376.5 -60.2 381.4 -52.6 386.1 -48.3 391 -49.9 395.7 -45.2 400.6 -36.2 405.3 -39.2 410.2 -34.6 414.9 -35.2 419.8 -31.9 424.5 -33.5 429.4 -26.5 434.1 -28.2 439 -22.7 443.7 -25.7 448.6 -19.5 453.3 -22.1 458.2 -15.9 462.9 -14.8 467.8 -11.5 472.5 -9.8 477.4 -6.5 482.1 -4.4 487 -1.9 491.7 -2.3 496.6 -0.5 501.3 -0.8 501.3 1.5 203.7 1.5z"/><path transform="translate(0 397.5)" d="M199 -0.7L203.9 -0.5 208.6 -1.9 213.5 -2.3 218.2 -3.5 223.1 -5.6 227.8 -7.5 232.7 -10.9 237.4 -11.7 242.3 -14.3 247 -14.5 251.9 -20.1 256.6 -18.3 261.5 -23.5 266.2 -21.5 271.1 -30.2 275.8 -25.2 280.7 -35.1 285.4 -33.8 290.3 -41 295 -37.1 299.9 -49 304.6 -45.1 309.5 -54.3 314.2 -44.4 319.1 -59.6 323.8 -49.8 328.7 -67.5 333.4 -51.4 338.3 -71.9 343 -55.5 347.9 -73.4 352.6 -61.9 357.5 -86.5 362.2 -54 367.1 -70.5 371.8 -53.6 376.7 -78.3 381.4 -53.8 386.3 -67.2 391 -51.1 395.9 -64.8 400.6 -37.5 405.5 -44.6 410.2 -35.8 415.1 -41.4 419.8 -33.1 424.7 -38.9 429.4 -27.7 434.3 -32.7 439 -24 443.9 -31 448.6 -20.7 453.5 -24.2 458.2 -17.2 463.1 -18 467.8 -12.7 472.7 -13.7 477.4 -7.7 482.3 -8 487 -3.1 491.9 -2.2 496.6 -1.7 501.5 -0.6 506.2 -0.6 506.2 1.5 199 1.5z"/><path transform="translate(0 398.8)" d="M199.2 0.3L203.9 -1.8 208.8 -1.1 213.5 -3.5 218.4 -3.3 223.1 -6.8 228 -6.5 232.7 -12.1 237.6 -10.4 242.3 -15.6 247.2 -14.3 251.9 -21.3 256.8 -19 261.5 -24.7 266.4 -24.3 271.1 -31.5 276 -28.8 280.7 -36.3 285.6 -36.3 290.3 -42.3 295.2 -38.8 299.9 -50.3 304.8 -43.7 309.5 -55.5 314.4 -49.9 319.1 -60.8 324 -59.4 328.7 -68.7 333.6 -65.5 338.3 -73.1 343.2 -65.1 347.9 -74.7 352.8 -58.2 357.5 -87.7 362.4 -57.7 367.1 -71.8 372 -56.6 376.7 -79.6 381.6 -58 386.3 -68.5 391.2 -64.2 395.9 -66 400.8 -51.7 405.5 -45.9 410.4 -38 415.1 -42.7 420 -34 424.7 -40.2 429.6 -33.6 434.3 -34 439.2 -28.3 443.9 -32.2 448.8 -22.3 453.5 -25.5 458.4 -19.7 463.1 -19.2 468 -14.4 472.7 -15 477.6 -9.7 482.3 -9.2 487.2 -4.8 491.9 -3.4 496.8 -1.4 501.5 -1.8 506.4 -0.1 506.4 1.5 199.2 1.5z"/><path transform="translate(0 400)" d="M199.2 -1L204.1 -0.8 208.8 -2.3 213.7 -2.6 218.4 -4.5 223.3 -7.4 228 -7.7 232.9 -12.6 237.6 -11.6 242.5 -17.6 247.2 -15.5 252.1 -21 256.8 -20.2 261.7 -28.1 266.4 -25.5 271.3 -34.3 276 -30 280.9 -43.8 285.6 -37.5 290.5 -49.2 295.2 -40 300.1 -53.1 304.8 -44.9 309.7 -74.4 314.4 -51.1 319.3 -94.5 324 -60.6 328.9 -100.1 333.6 -66.7 338.5 -94.5 343.2 -66.3 348.1 -102.6 352.8 -59.4 357.7 -102.3 362.4 -58.9 367.3 -100.1 372 -57.8 376.9 -94.8 381.6 -59.2 386.5 -79.8 391.2 -65.4 396.1 -72.7 400.8 -52.9 405.7 -64.6 410.4 -39.2 415.3 -44.4 420 -35.2 424.9 -40.4 429.6 -34.8 434.5 -38.8 439.2 -29.5 444.1 -31.3 448.8 -23.5 453.7 -28.7 458.4 -20.9 463.3 -23.6 468 -15.6 472.9 -18.9 477.6 -10.9 482.5 -11.4 487.2 -6 492.1 -5.3 496.8 -2.6 501.7 -1.5 506.4 -1.3 506.4 1.5 199.2 1.5z"/><path transform="translate(0 401.2)" d="M199.4 -0.1L204.1 -2 209 -1.3 213.7 -3.9 218.6 -3.9 223.3 -8.6 228.2 -7.5 232.9 -13.9 237.8 -12.4 242.5 -18.9 247.4 -16 252.1 -22.2 257 -19.8 261.7 -29.3 266.6 -27.7 271.3 -35.6 276.2 -35.2 280.9 -45 285.8 -39 290.5 -50.4 295.4 -43.7 300.1 -54.4 305 -57 309.7 -75.7 314.6 -71.8 319.3 -95.7 324.2 -69.9 328.9 -101.3 333.8 -84.1 338.5 -95.7 343.4 -80.1 348.1 -103.8 353 -68.5 357.7 -103.6 362.6 -79.6 367.3 -101.3 372.2 -64.5 376.9 -96 381.8 -77.1 386.5 -81 391.4 -57.7 396.1 -73.9 401 -55.1 405.7 -65.9 410.6 -54.4 415.3 -45.6 420.2 -38.8 424.9 -41.6 429.8 -34.5 434.5 -40 439.4 -32.2 444.1 -32.5 449 -26.6 453.7 -29.9 458.6 -22.7 463.3 -24.8 468.2 -17.2 472.9 -20.2 477.8 -12.9 482.5 -12.6 487.4 -8.2 492.1 -6.6 497 -2.7 501.7 -2.7 506.6 -0.7 511.3 -1 511.3 1.5 199.4 1.5z"/><path transform="translate(0 402.4)" d="M199.4 -1.3L204.3 -1 209 -2.5 213.9 -3.1 218.6 -5.1 223.5 -8.1 228.2 -8.7 233.1 -14.4 237.8 -13.6 242.7 -18.2 247.4 -17.2 252.3 -24.3 257 -21 261.9 -29.2 266.6 -28.9 271.5 -38.3 276.2 -36.4 281.1 -45 285.8 -40.2 290.7 -53.2 295.4 -45 300.3 -66.1 305 -58.2 309.9 -98.6 314.6 -73 319.5 -89.2 324.2 -71.1 329.1 -110.8 333.8 -85.3 338.7 -104.3 343.4 -81.3 348.3 -104.6 353 -69.8 357.9 -101.7 362.6 -80.8 367.5 -106.6 372.2 -65.8 377.1 -97.2 381.8 -78.3 386.7 -95.1 391.4 -58.9 396.3 -79.5 401 -56.3 405.9 -71.9 410.6 -55.6 415.5 -64.6 420.2 -40 425.1 -43.4 429.8 -35.7 434.7 -42 439.4 -33.4 444.3 -37.7 449 -27.8 453.9 -30.6 458.6 -23.9 463.5 -27.2 468.2 -18.4 473.1 -21.4 477.8 -14.1 482.7 -15.3 487.4 -9.5 492.3 -8.7 497 -3.9 501.9 -2.5 506.6 -1.9 511.5 -0.6 516.2 -0.6 516.2 1.5 199.4 1.5z"/><path transform="translate(0 403.6)" d="M199.6 -0.2L204.3 -2.3 209.2 -1.5 213.9 -4.3 218.8 -4.7 223.5 -9.3 228.4 -9.4 233.1 -15.6 238 -12.2 242.7 -19.4 247.6 -18.1 252.3 -25.5 257.2 -22.4 261.9 -30.4 266.8 -28 271.5 -39.6 276.4 -34.6 281.1 -46.2 286 -38.5 290.7 -54.4 295.6 -50.1 300.3 -67.3 305.2 -77.2 309.9 -99.9 314.8 -64.2 319.5 -90.4 324.4 -65.7 329.1 -112 334 -66.9 338.7 -105.5 343.6 -70.6 348.3 -105.8 353.2 -103.8 357.9 -102.9 362.8 -71.4 367.5 -107.8 372.4 -86.3 377.1 -98.4 382 -61.7 386.7 -96.3 391.6 -84.6 396.3 -80.8 401.2 -59.2 405.9 -73.2 410.8 -55.6 415.5 -65.8 420.4 -57.7 425.1 -44.7 430 -39.7 434.7 -43.3 439.6 -34.4 444.3 -38.9 449.2 -31.4 453.9 -31.9 458.8 -27.2 463.5 -28.5 468.4 -20.4 473.1 -22.6 478 -17 482.7 -16.6 487.6 -10.4 492.3 -9.9 497.2 -5.6 501.9 -3.8 506.8 -1.5 511.5 -1.9 516.4 -0.1 516.4 1.5 199.6 1.5z"/><path transform="translate(0 404.8)" d="M199.6 -1.4L204.5 -1.2 209.2 -2.7 214.1 -3.8 218.8 -5.9 223.7 -8.9 228.4 -10.6 233.3 -14.7 238 -13.4 242.9 -18.8 247.6 -19.3 252.5 -24.3 257.2 -23.6 262.1 -31.4 266.8 -29.2 271.7 -40.4 276.4 -35.8 281.3 -43 286 -39.7 290.9 -58.1 295.6 -51.3 300.5 -75.8 305.2 -78.4 310.1 -89.5 314.8 -65.4 319.7 -102.4 324.4 -66.9 329.3 -133.2 334 -68.1 338.9 -148.4 343.6 -71.8 348.5 -147.9 353.2 -105 358.1 -116.5 362.8 -72.6 367.7 -137.1 372.4 -87.5 377.3 -126.6 382 -62.9 386.9 -102.4 391.6 -85.8 396.5 -98.2 401.2 -60.4 406.1 -80.2 410.8 -56.8 415.7 -77.3 420.4 -58.9 425.3 -58.8 430 -40.9 434.9 -42.8 439.6 -35.6 444.5 -38.4 449.2 -32.6 454.1 -34.8 458.8 -28.4 463.7 -30.9 468.4 -21.6 473.3 -26.4 478 -18.2 482.9 -19 487.6 -11.6 492.5 -12.1 497.2 -6.8 502.1 -5.2 506.8 -2.7 511.7 -1.4 516.4 -1.3 516.4 1.5 199.6 1.5z"/><path transform="translate(0 406.1)" d="M199.8 -0.2L204.5 -2.4 209.4 -1.9 214.1 -5 219 -5.2 223.7 -10.1 228.6 -9 233.3 -16 238.2 -12.6 242.9 -20 247.8 -17.8 252.5 -25.5 257.4 -24.6 262.1 -32.7 267 -28.4 271.7 -41.6 276.6 -35.3 281.3 -44.2 286.2 -44.7 290.9 -59.3 295.8 -54.8 300.5 -77.1 305.4 -83.8 310.1 -90.8 315 -61.7 319.7 -103.6 324.6 -94.5 329.3 -134.5 334.2 -122.2 338.9 -149.7 343.8 -104.1 348.5 -149.2 353.4 -102 358.1 -117.7 363 -105.3 367.7 -138.3 372.6 -110.1 377.3 -127.8 382.2 -93.3 386.9 -103.6 391.8 -75.5 396.5 -99.4 401.4 -68.1 406.1 -81.4 411 -66.4 415.7 -78.6 420.6 -54.2 425.3 -60.1 430.2 -43.9 434.9 -44 439.8 -35.6 444.5 -39.6 449.4 -29.9 454.1 -36 459 -26.1 463.7 -32.1 468.6 -23 473.3 -27.6 478.2 -18.7 482.9 -20.3 487.8 -13.1 492.5 -13.4 497.4 -7.8 502.1 -6.4 507 -2.3 511.7 -2.6 516.6 -0.7 521.3 -0.9 521.3 1.5 199.8 1.5z"/><path transform="translate(0 407.3)" d="M199.8 -1.4L204.7 -1.4 209.4 -3.1 214.3 -4 219 -6.4 223.9 -8.7 228.6 -10.2 233.5 -14.7 238.2 -13.8 243.1 -20.5 247.8 -19 252.7 -25.5 257.4 -25.8 262.3 -34 267 -29.6 271.9 -40.7 276.6 -36.5 281.5 -46.6 286.2 -45.9 291.1 -65.3 295.8 -56 300.7 -85 305.4 -85 310.3 -98.5 315 -63 319.9 -129.8 324.6 -95.7 329.5 -146.4 334.2 -123.4 339.1 -165.1 343.8 -105.3 348.7 -178.5 353.4 -103.2 358.3 -175.2 363 -106.5 367.9 -151.8 372.6 -111.3 377.5 -118.7 382.2 -94.5 387.1 -115.6 391.8 -76.7 396.7 -103.8 401.4 -69.3 406.3 -111.4 411 -67.6 415.9 -90.9 420.6 -55.4 425.5 -68.3 430.2 -45.1 435.1 -49.7 439.8 -36.8 444.7 -40.3 449.4 -31.1 454.3 -38.3 459 -27.3 463.9 -32.8 468.6 -24.2 473.5 -24.9 478.2 -19.9 483.1 -21.8 487.8 -14.3 492.7 -14.4 497.4 -9 502.3 -7.4 507 -3.5 511.9 -2.1 516.6 -1.9 521.5 -0.3 526.2 -0.6 526.2 1.5 199.8 1.5z"/><path transform="translate(0 408.5)" d="M195.1 -0.8L200 -0.3 204.7 -2.7 209.6 -1.7 214.3 -5.2 219.2 -5.3 223.9 -9.9 228.8 -9.4 233.5 -15.9 238.4 -12.9 243.1 -21.7 248 -17.7 252.7 -26.7 257.6 -23.6 262.3 -35.2 267.2 -31.8 271.9 -42 276.8 -38.6 281.5 -47.8 286.4 -46.1 291.1 -66.5 296 -72 300.7 -86.2 305.6 -63.5 310.3 -99.7 315.2 -92.3 319.9 -131 324.8 -127.3 329.5 -147.6 334.4 -114.4 339.1 -166.3 344 -148.7 348.7 -179.7 353.6 -132.2 358.3 -176.4 363.2 -126.8 367.9 -153 372.8 -104.4 377.5 -119.9 382.4 -92.9 387.1 -116.8 392 -95.8 396.7 -105.1 401.6 -62.4 406.3 -112.7 411.2 -69.6 415.9 -92.2 420.8 -60.8 425.5 -69.5 430.4 -51.7 435.1 -50.9 440 -37.6 444.7 -41.6 449.6 -32.1 454.3 -39.5 459.2 -28.6 463.9 -34.1 468.8 -27.1 473.5 -26.1 478.4 -22 483.1 -23 488 -14.4 492.7 -15.6 497.6 -9.6 502.3 -8.6 507.2 -4.4 511.9 -3.4 516.8 -1 521.5 -1.5 526.4 0.4 526.4 1.5 195.1 1.5z"/><path transform="translate(0 409.7)" d="M195.3 0.5L200 -1.5 204.9 -1.2 209.6 -2.9 214.5 -4 219.2 -6.5 224.1 -10 228.8 -10.6 233.7 -14 238.4 -14.1 243.3 -20.5 248 -18.9 252.9 -26.2 257.6 -24.9 262.5 -32.5 267.2 -33 272.1 -40.4 276.8 -39.8 281.7 -45.3 286.4 -47.4 291.3 -66.8 296 -73.2 300.9 -95.3 305.6 -64.7 310.5 -94.4 315.2 -93.5 320.1 -147.4 324.8 -128.5 329.7 -166.5 334.4 -115.6 339.3 -184.5 344 -149.9 348.9 -184.4 353.6 -133.5 358.5 -183.1 363.2 -128.1 368.1 -185 372.8 -105.6 377.7 -177.4 382.4 -94.1 387.3 -141.4 392 -97 396.9 -130.4 401.6 -63.6 406.5 -108.3 411.2 -70.9 416.1 -86.8 420.8 -62 425.7 -85.7 430.4 -53 435.3 -65.3 440 -38.9 444.9 -44.3 449.6 -33.3 454.5 -40.2 459.2 -29.8 464.1 -35.4 468.8 -28.3 473.7 -29.3 478.4 -23.2 483.3 -23.6 488 -15.6 492.9 -18.8 497.6 -10.8 502.5 -9.8 507.2 -5.6 512.1 -2.7 516.8 -2.2 521.7 -0.9 526.4 -0.8 526.4 1.5 195.3 1.5z"/><path transform="translate(0 411)" d="M200.2 -0.1L204.9 -2.4 209.8 -1.8 214.5 -5.2 219.4 -4.6 224.1 -11.3 229 -9.1 233.7 -15.3 238.6 -13.9 243.3 -21.7 248.2 -18.5 252.9 -27.4 257.8 -25.3 262.5 -33.8 267.4 -30.2 272.1 -41.7 277 -35.7 281.7 -46.6 286.6 -46 291.3 -68 296.2 -73.7 300.9 -96.5 305.8 -69.3 310.5 -95.6 315.4 -94.7 320.1 -148.6 325 -135 329.7 -167.7 334.6 -120 339.3 -185.8 344.2 -142.3 348.9 -185.6 353.8 -186.2 358.5 -184.3 363.4 -131.8 368.1 -186.2 373 -135 377.7 -178.6 382.6 -104.5 387.3 -142.6 392.2 -97.2 396.9 -131.6 401.8 -77.8 406.5 -109.5 411.4 -65.3 416.1 -88.1 421 -79.6 425.7 -87 430.6 -59.7 435.3 -66.6 440.2 -41.5 444.9 -45.5 449.8 -35.3 454.5 -41.5 459.4 -31.5 464.1 -36.6 469 -26.6 473.7 -30.5 478.6 -20.8 483.3 -24.8 488.2 -17 492.9 -20.1 497.8 -11.7 502.5 -11 507.4 -5.5 512.1 -4 517 -1.4 521.7 -2.1 526.6 0 526.6 1.5 200.2 1.5z"/><path transform="translate(0 412.2)" d="M200.2 -1.3L205.1 -1.2 209.8 -3 214.7 -3.3 219.4 -5.8 224.3 -8.7 229 -10.3 233.9 -13.9 238.6 -15.1 243.5 -18.5 248.2 -19.7 253.1 -26.9 257.8 -26.5 262.7 -30.9 267.4 -31.4 272.3 -40.1 277 -37 281.9 -48.3 286.6 -47.2 291.5 -69.6 296.2 -74.9 301.1 -101.9 305.8 -70.6 310.7 -113.6 315.4 -95.9 320.3 -150 325 -136.2 329.9 -185.8 334.6 -121.2 339.5 -184.9 344.2 -143.5 349.1 -183.7 353.8 -187.4 358.7 -188.5 363.4 -133 368.3 -177.4 373 -136.2 377.9 -187.9 382.6 -105.7 387.5 -144.8 392.2 -98.4 397.1 -117.3 401.8 -79 406.7 -97.8 411.4 -66.5 416.3 -90.7 421 -80.8 425.9 -89.1 430.6 -60.9 435.5 -67.5 440.2 -42.7 445.1 -44.2 449.8 -36.5 454.7 -41.9 459.4 -32.7 464.3 -35.9 469 -27.8 473.9 -30.3 478.6 -22 483.5 -26.1 488.2 -18.2 493.1 -18.5 497.8 -12.9 502.7 -11.9 507.4 -6.7 512.3 -4.8 517 -2.6 521.9 -1.2 526.6 -1.2 526.6 1.5 200.2 1.5z"/><path transform="translate(0 413.4)" d="M200.4 0.1L205.1 -2.4 210 -1.4 214.7 -4.5 219.6 -4.1 224.3 -9.9 229.2 -9.1 233.9 -15.1 238.8 -11.9 243.5 -19.8 248.4 -17 253.1 -28.1 258 -23.1 262.7 -32.1 267.6 -29.4 272.3 -41.4 277.2 -36.3 281.9 -49.6 286.8 -49.3 291.5 -70.9 296.4 -60.6 301.1 -103.1 306 -68.3 310.7 -114.9 315.6 -66.4 320.3 -151.2 325.2 -131.3 329.9 -187 334.8 -121.7 339.5 -186.2 344.4 -156.4 349.1 -184.9 354 -136.5 358.7 -189.8 363.6 -148.7 368.3 -178.6 373.2 -167.7 377.9 -189.1 382.8 -120.2 387.5 -146 392.4 -107.7 397.1 -118.5 402 -101.1 406.7 -99.1 411.6 -86.6 416.3 -92 421.2 -65.4 425.9 -90.3 430.8 -69.6 435.5 -68.7 440.4 -52.5 445.1 -45.4 450 -37.1 454.7 -43.1 459.6 -32.1 464.3 -37.2 469.2 -26 473.9 -31.5 478.8 -23.7 483.5 -27.4 488.4 -18.2 493.1 -19.7 498 -13.8 502.7 -13.1 507.6 -7.4 512.3 -6 517.2 -1.9 521.9 -2.4 526.8 -0.3 531.5 -0.6 531.5 1.5 200.4 1.5z"/><path transform="translate(0 414.6)" d="M200.4 -1.1L205.3 -0.7 210 -2.6 214.9 -2.6 219.6 -5.4 224.5 -7.6 229.2 -10.3 234.1 -13 238.8 -13.1 243.7 -18.9 248.4 -18.2 253.3 -24.2 258 -24.3 262.9 -29.9 267.6 -30.6 272.5 -40.2 277.2 -37.5 282.1 -44.3 286.8 -50.5 291.7 -62.6 296.4 -61.8 301.3 -84 306 -69.5 310.9 -116.6 315.6 -67.7 320.5 -141.4 325.2 -132.5 330.1 -176.5 334.8 -122.9 339.7 -180.5 344.4 -157.6 349.3 -186.3 354 -137.8 358.9 -183.8 363.6 -149.9 368.5 -186.2 373.2 -168.9 378.1 -176.1 382.8 -121.5 387.7 -170 392.4 -109 397.3 -125.3 402 -102.3 406.9 -101.6 411.6 -87.8 416.5 -103.3 421.2 -66.6 426.1 -90.1 430.8 -70.8 435.7 -77.3 440.4 -53.7 445.3 -48.9 450 -38.3 454.9 -40.8 459.6 -33.3 464.5 -38.2 469.2 -27.2 474.1 -32.1 478.8 -24.9 483.7 -25 488.4 -19.4 493.3 -19.9 498 -15 502.9 -13.5 507.6 -8.6 512.5 -5.9 517.2 -3.2 522.1 -1.7 526.8 -1.5 531.7 0.2 531.7 1.5 200.4 1.5z"/><path transform="translate(0 415.8)" d="M200.6 0.5L205.3 -1.9 210.2 -0.9 214.9 -3.8 219.8 -3.1 224.5 -8.8 229.4 -8 234.1 -14.3 239 -11.6 243.7 -20.1 248.6 -17.1 253.3 -25.4 258.2 -22.5 262.9 -31.1 267.8 -30 272.5 -41.4 277.4 -34.5 282.1 -45.5 287 -44.1 291.7 -63.8 296.6 -56.7 301.3 -85.2 306.2 -60.5 310.9 -117.8 315.8 -75.2 320.5 -142.6 325.4 -119.4 330.1 -177.7 335 -146.3 339.7 -181.7 344.6 -124.9 349.3 -187.5 354.2 -135.3 358.9 -185.1 363.8 -132.5 368.5 -187.4 373.4 -117.3 378.1 -177.3 383 -114.3 387.7 -171.2 392.6 -105.7 397.3 -126.5 402.2 -74.1 406.9 -102.8 411.8 -74.6 416.5 -104.5 421.4 -61.1 426.1 -91.4 431 -65.5 435.7 -78.6 440.6 -48 445.3 -50.2 450.2 -36.3 454.9 -42.1 459.8 -32 464.5 -39.4 469.4 -27 474.1 -33.3 479 -25 483.7 -26.2 488.6 -21.3 493.3 -21.1 498.2 -13.8 502.9 -14.8 507.8 -7.6 512.5 -7.2 517.4 -2.2 522.1 -2.9 527 -0.6 531.7 -1 531.7 1.5 200.6 1.5z"/><path transform="translate(0 417)" d="M200.6 -0.8L205.5 -0.4 210.2 -2.2 215.1 -2.3 219.8 -4.4 224.7 -6.4 229.4 -9.2 234.3 -12 239 -12.8 243.9 -17.8 248.6 -18.3 253.5 -22.4 258.2 -23.7 263.1 -28.1 267.8 -31.2 272.7 -36.3 277.4 -35.7 282.3 -44 287 -45.3 291.9 -52.6 296.6 -57.9 301.5 -81.7 306.2 -61.8 311.1 -99.3 315.8 -76.5 320.7 -97.7 325.4 -120.6 330.3 -178.2 335 -147.5 339.9 -189.1 344.6 -126.2 349.5 -187.5 354.2 -136.5 359.1 -182.2 363.8 -133.7 368.7 -188 373.4 -118.5 378.3 -177 383 -115.5 387.9 -152.7 392.6 -106.9 397.5 -116 402.2 -75.3 407.1 -121.7 411.8 -75.8 416.7 -101 421.4 -62.3 426.3 -81.6 431 -66.7 435.9 -76.8 440.6 -49.2 445.5 -45.4 450.2 -37.5 455.1 -40.8 459.8 -33.2 464.7 -38.1 469.4 -28.2 474.3 -34 479 -26.2 483.9 -26 488.6 -22.6 493.5 -21.4 498.2 -15 503.1 -15.4 507.8 -8.8 512.7 -6.7 517.4 -3.4 522.3 -1.8 527 -1.8 531.9 0 531.9 1.5 200.6 1.5z"/><path transform="translate(0 418.3)" d="M200.8 0.5L205.5 -1.6 210.4 -0.7 215.1 -3.5 220 -2.2 224.7 -7.7 229.6 -6.3 234.3 -13.3 239.2 -10.5 243.9 -19 248.8 -14.9 253.5 -23.6 258.4 -19.9 263.1 -29.3 268 -26.1 272.7 -37.5 277.6 -34.4 282.3 -45.2 287.2 -38.8 291.9 -53.8 296.8 -47.5 301.5 -82.9 306.4 -76.9 311.1 -100.5 316 -62.5 320.7 -99 325.6 -78.5 330.3 -179.4 335.2 -103.2 339.9 -190.3 344.8 -157.4 349.5 -188.7 354.4 -129.6 359.1 -183.4 364 -169.1 368.7 -189.2 373.6 -116.5 378.3 -178.2 383.2 -93.6 387.9 -153.9 392.8 -90.9 397.5 -117.3 402.4 -68.3 407.1 -122.9 412 -86.4 416.7 -102.2 421.6 -74.5 426.3 -82.8 431.2 -58.4 435.9 -78 440.8 -49 445.5 -46.6 450.4 -37.6 455.1 -42 460 -32.1 464.7 -39.3 469.6 -29.9 474.3 -35.2 479.2 -25.6 483.9 -27.2 488.8 -20.2 493.5 -22.6 498.4 -15.8 503.1 -16.6 508 -8.2 512.7 -8 517.6 -2.6 522.3 -3.1 527.2 -0.7 531.9 -1.2 531.9 1.5 200.8 1.5z"/><path transform="translate(0 419.5)" d="M205.7 0.3L210.4 -1.9 215.3 -1.6 220 -3.5 224.9 -4.1 229.6 -7.6 234.5 -8.9 239.2 -11.7 244.1 -14.9 248.8 -16.2 253.7 -19.4 258.4 -21.1 263.3 -26.4 268 -27.3 272.9 -34.8 277.6 -35.7 282.5 -40.6 287.2 -40 292.1 -48.5 296.8 -48.7 301.7 -67.1 306.4 -78.1 311.3 -102.5 316 -63.7 320.9 -105.3 325.6 -79.8 330.5 -102.6 335.2 -104.4 340.1 -131.6 344.8 -158.6 349.7 -187.2 354.4 -130.8 359.3 -183.9 364 -170.3 368.9 -158.1 373.6 -117.8 378.5 -177.2 383.2 -94.9 388.1 -121.5 392.8 -92.2 397.7 -129.7 402.4 -69.5 407.3 -100.6 412 -87.6 416.9 -110.7 421.6 -75.8 426.5 -92.5 431.2 -59.7 436.1 -69.6 440.8 -50.3 445.7 -46 450.4 -38.9 455.3 -41.5 460 -33.3 464.9 -36.4 469.6 -31.2 474.5 -30.6 479.2 -26.8 484.1 -26.6 488.8 -21.5 493.7 -21.5 498.4 -17 503.3 -14.7 508 -9.4 512.9 -7 517.6 -3.8 522.5 -1.8 527.2 -2 532.1 -0.1 532.1 1.5 205.7 1.5z"/><path transform="translate(0 420.7)" d="M210.6 -0.1L215.3 -2.8 220.2 -1.7 224.9 -5.3 229.8 -4.1 234.5 -10.1 239.4 -8.4 244.1 -16.1 249 -14.5 253.7 -20.6 258.6 -18.5 263.3 -27.6 268.2 -22.5 272.9 -36 277.8 -27.7 282.5 -41.8 287.4 -35.2 292.1 -49.7 297 -39.8 301.7 -68.3 306.6 -60.8 311.3 -103.7 316.2 -63.7 320.9 -106.5 325.8 -82.7 330.5 -103.8 335.4 -75.2 340.1 -132.8 345 -99.7 349.7 -188.4 354.6 -123.8 359.3 -185.1 364.2 -102.4 368.9 -159.3 373.8 -84.7 378.5 -178.4 383.4 -82.7 388.1 -122.7 393 -97.7 397.7 -130.9 402.6 -66.4 407.3 -101.8 412.2 -66.5 416.9 -111.9 421.8 -65.5 426.5 -93.7 431.4 -57.9 436.1 -70.8 441 -48.6 445.7 -47.2 450.6 -36.8 455.3 -42.7 460.2 -34.6 464.9 -37.6 469.8 -27.5 474.5 -31.8 479.4 -22.7 484.1 -27.8 489 -20.8 493.7 -22.7 498.6 -13.5 503.3 -15.9 508.2 -8.9 512.9 -8.2 517.8 -2.8 522.5 -3 527.4 -0.9 532.1 -1.3 532.1 1.5 210.6 1.5z"/><path transform="translate(0 421.9)" d="M210.6 -1.3L215.5 -0.9 220.2 -2.9 225.1 -2.8 229.8 -5.3 234.7 -6.6 239.4 -9.7 244.3 -11.6 249 -15.7 253.9 -18.6 258.6 -19.7 263.5 -24.6 268.2 -23.7 273.1 -30.7 277.8 -29 282.7 -34.8 287.4 -36.4 292.3 -43.4 297 -41.1 301.9 -50.2 306.6 -62.1 311.5 -67.2 316.2 -65 321.1 -85.1 325.8 -84 330.7 -98.3 335.4 -76.5 340.3 -104.3 345 -100.9 349.9 -110.7 354.6 -125 359.5 -140.8 364.2 -103.6 369.1 -114.9 373.8 -85.9 378.7 -137.6 383.4 -83.9 388.3 -111.6 393 -99 397.9 -99.9 402.6 -67.6 407.5 -97 412.2 -67.7 417.1 -86.2 421.8 -66.7 426.7 -84.7 431.4 -59.1 436.3 -71.4 441 -49.8 445.9 -48.6 450.6 -38 455.5 -41.3 460.2 -35.8 465.1 -35.6 469.8 -28.8 474.7 -31.9 479.4 -23.9 484.3 -26.1 489 -22 493.9 -22.3 498.6 -14.7 503.5 -13.5 508.2 -10.2 513.1 -7.1 517.8 -4 522.7 -2 527.4 -2.1 532.3 -0.1 532.3 1.5 210.6 1.5z"/><path transform="translate(0 423.2)" d="M210.8 0.4L215.5 -2.1 220.4 -0.9 225.1 -4 230 -2.5 234.7 -7.8 239.6 -6.6 244.3 -12.8 249.2 -11.2 253.9 -19.8 258.8 -14.3 263.5 -25.8 268.4 -18.1 273.1 -31.9 278 -23.6 282.7 -36 287.6 -32.5 292.3 -44.6 297.2 -39.5 301.9 -51.4 306.8 -45.5 311.5 -68.4 316.4 -51.7 321.1 -86.3 326 -69.3 330.7 -99.6 335.6 -64.4 340.3 -105.5 345.2 -65.6 349.9 -111.9 354.8 -82.9 359.5 -142 364.4 -82.7 369.1 -116.1 374 -77 378.7 -138.8 383.6 -78.7 388.3 -112.8 393.2 -69.8 397.9 -101.1 402.8 -82.6 407.5 -98.2 412.4 -63.1 417.1 -87.4 422 -59.9 426.7 -85.9 431.6 -59.6 436.3 -72.6 441.2 -38.1 445.9 -49.8 450.8 -36.9 455.5 -42.5 460.4 -34.4 465.1 -36.8 470 -30.3 474.7 -33.1 479.6 -22.1 484.3 -27.3 489.2 -19.4 493.9 -23.5 498.8 -14.6 503.5 -14.7 508.4 -8.2 513.1 -8.3 518 -2.3 522.7 -3.2 527.6 -0.7 532.3 -1.3 532.3 1.5 210.8 1.5z"/><path transform="translate(0 424.4)" d="M215.7 0.1L220.4 -2.2 225.3 -1.8 230 -3.7 234.9 -4.2 239.6 -7.8 244.5 -9.4 249.2 -12.4 254.1 -14.8 258.8 -15.5 263.7 -20.6 268.4 -19.3 273.3 -24.2 278 -24.8 282.9 -28.7 287.6 -33.8 292.5 -39.6 297.2 -40.8 302.1 -45.6 306.8 -46.8 311.7 -53.3 316.4 -52.9 321.3 -65.9 326 -70.5 330.9 -88.2 335.6 -65.6 340.5 -95.2 345.2 -66.9 350.1 -95 354.8 -84.1 359.7 -121.3 364.4 -84 369.3 -123.7 374 -78.2 378.9 -98.8 383.6 -80 388.5 -109 393.2 -71 398.1 -108.1 402.8 -83.8 407.7 -84.8 412.4 -64.3 417.3 -86.3 422 -61.1 426.9 -74.4 431.6 -60.9 436.5 -55.1 441.2 -39.3 446.1 -43.2 450.8 -38.1 455.7 -39.6 460.4 -35.7 465.3 -35.1 470 -31.5 474.9 -30.6 479.6 -23.3 484.5 -25.7 489.2 -20.6 494.1 -19.4 498.8 -15.8 503.7 -13.3 508.4 -9.4 513.3 -6.2 518 -3.5 522.9 -1.9 527.6 -1.9 532.5 0 532.5 1.5 215.7 1.5z"/><path transform="translate(0 425.6)" d="M220.6 -0.1L225.3 -3 230.2 -1.9 234.9 -5.4 239.8 -4 244.5 -10.6 249.4 -8.2 254.1 -16 259 -12.9 263.7 -21.8 268.6 -17 273.3 -25.4 278.2 -21.1 282.9 -29.9 287.8 -24.5 292.5 -40.8 297.4 -30.5 302.1 -46.8 307 -42.2 311.7 -54.5 316.6 -43.3 321.3 -67.1 326.2 -50.1 330.9 -89.4 335.8 -66.4 340.5 -96.5 345.4 -65 350.1 -96.2 355 -68.4 359.7 -122.5 364.6 -73.9 369.3 -124.9 374.2 -74.7 378.9 -100 383.8 -84.2 388.5 -110.3 393.4 -64.3 398.1 -109.3 403 -72.5 407.7 -86 412.6 -59.7 417.3 -87.5 422.2 -55.4 426.9 -75.6 431.8 -51.1 436.5 -56.3 441.4 -41.4 446.1 -44.4 451 -32.7 455.7 -40.9 460.6 -33 465.3 -36.3 470.2 -25.8 474.9 -31.8 479.8 -23.3 484.5 -26.9 489.4 -17.6 494.1 -20.6 499 -12.9 503.7 -14.5 508.6 -7.2 513.3 -7.4 518.2 -1.9 522.9 -3.1 527.8 -0.6 532.5 -1.2 532.5 1.5 220.6 1.5z"/><path transform="translate(0 426.8)" d="M220.6 -1.3L225.5 -0.7 230.2 -3.1 235.1 -3 239.8 -5.2 244.7 -5.9 249.4 -9.4 254.3 -10.8 259 -14.2 263.9 -16.6 268.6 -18.2 273.5 -22 278.2 -22.3 283.1 -26.7 287.8 -25.7 292.7 -29.3 297.4 -31.7 302.3 -36.8 307 -43.5 311.9 -49.8 316.6 -44.5 321.5 -54.4 326.2 -51.3 331.1 -67.5 335.8 -67.7 340.7 -69.5 345.4 -66.2 350.3 -80.8 355 -69.6 359.9 -94.1 364.6 -75.2 369.5 -96.3 374.2 -75.9 379.1 -87.7 383.8 -85.4 388.7 -91.7 393.4 -65.5 398.3 -80.9 403 -73.7 407.9 -86.1 412.6 -60.9 417.5 -72.6 422.2 -56.6 427.1 -58.4 431.8 -52.3 436.7 -45.5 441.4 -42.6 446.3 -41 451 -33.9 455.9 -37.2 460.6 -34.2 465.5 -32.7 470.2 -27.1 475.1 -30.5 479.8 -24.6 484.7 -23.6 489.4 -18.8 494.3 -18.8 499 -14.1 503.9 -12.2 508.6 -8.4 513.5 -4.8 518.2 -3.2 523.1 -1.5 527.8 -1.8 532.7 0.3 532.7 1.5 220.6 1.5z"/><path transform="translate(0 428)" d="M220.8 0.3L225.5 -2 230.4 -0.8 235.1 -4.2 240 -2.7 244.7 -7.1 249.6 -5.6 254.3 -12 259.2 -9.6 263.9 -17.8 268.8 -12.2 273.5 -23.2 278.4 -18.5 283.1 -27.9 288 -19.3 292.7 -30.5 297.6 -24.7 302.3 -38.1 307.2 -33.2 311.9 -51 316.8 -38 321.5 -55.6 326.4 -43.4 331.1 -68.7 336 -52.7 340.7 -70.7 345.6 -56.9 350.3 -82 355.2 -59.6 359.9 -95.3 364.8 -70.6 369.5 -97.5 374.4 -62.6 379.1 -88.9 384 -61.2 388.7 -93 393.6 -62.8 398.3 -82.1 403.2 -60 407.9 -87.4 412.8 -59.2 417.5 -73.9 422.4 -48.4 427.1 -59.7 432 -39.9 436.7 -46.7 441.6 -38.3 446.3 -42.2 451.2 -32.7 455.9 -38.4 460.8 -28.3 465.5 -34 470.4 -24.2 475.1 -31.7 480 -21.5 484.7 -24.8 489.6 -15.9 494.3 -20 499.2 -11.2 503.9 -13.4 508.8 -5.5 513.5 -6 518.4 -1.6 523.1 -2.7 528 -0.2 532.7 -0.9 532.7 1.5 220.8 1.5z"/><path transform="translate(0 429.3)" d="M225.7 0.2L230.4 -2 235.3 -1.6 240 -3.9 244.9 -3.8 249.6 -6.8 254.5 -6.9 259.2 -10.9 264.1 -12.2 268.8 -13.5 273.7 -17.5 278.4 -19.8 283.3 -21.6 288 -20.5 292.9 -25.6 297.6 -25.9 302.5 -33 307.2 -34.4 312.1 -34 316.8 -39.2 321.7 -43.8 326.4 -44.6 331.3 -53.2 336 -53.9 340.9 -57.8 345.6 -58.2 350.5 -65.4 355.2 -60.8 360.1 -67.9 364.8 -71.9 369.7 -69.6 374.4 -63.9 379.3 -74.7 384 -62.5 388.9 -75.7 393.6 -64 398.5 -67.7 403.2 -61.2 408.1 -68.7 412.8 -60.4 417.7 -58.7 422.4 -49.7 427.3 -46.2 432 -41.1 436.9 -44.2 441.6 -39.5 446.5 -38 451.2 -33.9 456.1 -34.9 460.8 -29.6 465.7 -29.8 470.4 -25.4 475.3 -27.5 480 -22.7 484.9 -22.7 489.6 -17.1 494.5 -15.7 499.2 -12.4 504.1 -9.3 508.8 -6.7 513.7 -2.7 518.4 -2.9 523.3 -1 528 -1.4 532.9 0.6 532.9 1.5 225.7 1.5z"/><path transform="translate(0 430.5)" d="M230.6 0.1L235.3 -2.8 240.2 -1.4 244.9 -5 249.8 -3 254.5 -8.1 259.4 -6.1 264.1 -13.4 269 -9.8 273.7 -18.7 278.6 -12.7 283.3 -22.8 288.2 -17.6 292.9 -26.8 297.8 -20.9 302.5 -34.2 307.4 -24.8 312.1 -35.2 317 -30.7 321.7 -45 326.6 -33.4 331.3 -54.5 336.2 -43.7 340.9 -59 345.8 -50.7 350.5 -66.6 355.4 -50.4 360.1 -69.2 365 -49.8 369.7 -70.8 374.6 -55.1 379.3 -76 384.2 -53.4 388.9 -76.9 393.8 -49.1 398.5 -68.9 403.4 -54.9 408.1 -69.9 413 -46.3 417.7 -60 422.6 -38.5 427.3 -47.4 432.2 -33.6 436.9 -45.4 441.8 -33.8 446.5 -39.2 451.4 -28.1 456.1 -36.2 461 -24 465.7 -31 470.6 -21.1 475.3 -28.7 480.2 -18.3 484.9 -23.9 489.8 -14.4 494.5 -16.9 499.4 -9.4 504.1 -10.5 509 -3.7 513.7 -4 518.6 -1.2 523.3 -2.2 528.2 0.2 528.2 1.5 230.6 1.5z"/><path transform="translate(0 431.7)" d="M235.5 -0.1L240.2 -2.6 245.1 -2.1 249.8 -4.2 254.7 -4.4 259.4 -7.3 264.3 -8.4 269 -11 273.9 -12 278.6 -13.9 283.5 -17.9 288.2 -18.8 293.1 -21.9 297.8 -22.1 302.7 -24.1 307.4 -26 312.3 -31.6 317 -32 321.9 -31.4 326.6 -34.7 331.5 -38.7 336.2 -44.9 341.1 -44.8 345.8 -51.9 350.7 -53.7 355.4 -51.7 360.3 -54.6 365 -51 369.9 -61.1 374.6 -56.3 379.5 -58.9 384.2 -54.6 389.1 -60 393.8 -50.3 398.7 -55.1 403.4 -56.1 408.3 -46.7 413 -47.5 417.9 -40.8 422.6 -39.7 427.5 -41.6 432.2 -34.8 437.1 -38.4 441.8 -35 446.7 -34.2 451.4 -29.3 456.3 -31.3 461 -25.2 465.9 -26.7 470.6 -22.3 475.5 -25.1 480.2 -19.5 485.1 -18 489.8 -15.6 494.7 -12.5 499.4 -10.6 504.3 -7.1 509 -5 513.9 -2 518.6 -2.4 523.5 -0.4 528.2 -1 528.2 1.5 235.5 1.5z"/><path transform="translate(0 432.9)" d="M240.4 -0.1L245.1 -3.3 250 -1.8 254.7 -5.6 259.6 -3.4 264.3 -9.6 269.2 -5.8 273.9 -13.2 278.8 -10.1 283.5 -19.1 288.4 -13.9 293.1 -23.1 298 -18 302.7 -25.3 307.6 -21.9 312.3 -32.8 317.2 -24.1 321.9 -32.6 326.8 -26 331.5 -40 336.4 -29.2 341.1 -46 346 -31 350.7 -54.9 355.6 -33.5 360.3 -55.8 365.2 -38 369.9 -62.3 374.8 -42.3 379.5 -60.1 384.4 -38.8 389.1 -61.2 394 -39.9 398.7 -56.4 403.6 -33.4 408.3 -47.9 413.2 -36.6 417.9 -42.1 422.8 -31.4 427.5 -42.8 432.4 -31.1 437.1 -39.6 442 -27.7 446.7 -35.4 451.6 -26.3 456.3 -32.5 461.2 -22.5 465.9 -27.9 470.8 -20 475.5 -26.3 480.4 -15.8 485.1 -19.2 490 -10.8 494.7 -13.8 499.6 -6.3 504.3 -8.4 509.2 -1.9 513.9 -3.3 518.8 -0.6 523.5 -1.6 528.4 0.6 528.4 1.5 240.4 1.5z"/><path transform="translate(0 434.1)" d="M240.4 -1.3L245.3 -0.3 250 -3 254.9 -2.2 259.6 -4.6 264.5 -5.1 269.2 -7 274.1 -8.1 278.8 -11.3 283.7 -12.6 288.4 -15.1 293.3 -18.1 298 -19.2 302.9 -20.2 307.6 -23.1 312.5 -23.4 317.2 -25.3 322.1 -26.2 326.8 -27.2 331.7 -31.4 336.4 -30.5 341.3 -35.2 346 -32.3 350.9 -36.4 355.6 -34.8 360.5 -39.7 365.2 -39.2 370.1 -38.8 374.8 -43.5 379.7 -39.9 384.4 -40 389.3 -39.6 394 -41.1 398.9 -38.2 403.6 -34.6 408.5 -37.1 413.2 -37.8 418.1 -39.2 422.8 -32.6 427.7 -36.9 432.4 -32.3 437.3 -33.5 442 -28.9 446.9 -29.5 451.6 -27.5 456.5 -25.9 461.2 -23.7 466.1 -26 470.8 -21.2 475.7 -19.7 480.4 -17 485.3 -15.1 490 -12 494.9 -9.2 499.6 -7.5 504.5 -3.5 509.2 -3.2 514.1 -1.2 518.8 -1.8 523.7 0.3 523.7 1.5 240.4 1.5z"/><path transform="translate(0 435.4)" d="M240.6 0.3L245.3 -1.5 250.2 -0.2 254.9 -3.4 259.8 -1.7 264.5 -6.3 269.4 -3.6 274.1 -9.3 279 -6.7 283.7 -13.8 288.6 -9.7 293.3 -19.3 298.2 -14.2 302.9 -21.4 307.8 -14.9 312.5 -24.6 317.4 -20.7 322.1 -27.5 327 -20.6 331.7 -32.7 336.6 -25.5 341.3 -36.4 346.2 -24.7 350.9 -37.7 355.8 -27.3 360.5 -40.9 365.4 -29.1 370.1 -40 375 -33.6 379.7 -41.1 384.6 -30.4 389.3 -40.8 394.2 -30.8 398.9 -39.4 403.8 -28.8 408.5 -38.3 413.4 -31.2 418.1 -40.4 423 -26.8 427.7 -38.2 432.6 -25.6 437.3 -34.7 442.2 -25.4 446.9 -30.7 451.8 -21.2 456.5 -27.2 461.4 -18.7 466.1 -27.2 471 -16.9 475.7 -20.9 480.6 -12 485.3 -16.3 490.2 -7.8 494.9 -10.4 499.8 -3.3 504.5 -4.7 509.4 -1 514.1 -2.4 519 0 519 1.5 240.6 1.5z"/><path transform="translate(0 436.6)" d="M250.2 -1.4L255.1 -0.3 259.8 -2.9 264.7 -2.2 269.4 -4.8 274.3 -5.1 279 -7.9 283.9 -7 288.6 -10.9 293.5 -11.8 298.2 -15.4 303.1 -15.4 307.8 -16.1 312.7 -18.8 317.4 -21.9 322.3 -21.1 327 -21.8 331.9 -25.8 336.6 -26.7 341.5 -26.8 346.2 -25.9 351.1 -29.7 355.8 -28.5 360.7 -31.7 365.4 -30.3 370.3 -31.7 375 -34.8 379.9 -31.5 384.6 -31.6 389.5 -34.1 394.2 -32 399.1 -31.9 403.8 -30 408.7 -32.2 413.4 -32.4 418.3 -32.1 423 -28 427.9 -29.6 432.6 -26.8 437.5 -26.4 442.2 -26.6 447.1 -25.2 451.8 -22.4 456.7 -23.7 461.4 -19.9 466.3 -19 471 -18.1 475.9 -15.1 480.6 -13.2 485.5 -9.4 490.2 -9 495.1 -5.5 499.8 -4.5 504.7 -1.6 509.4 -2.2 514.3 -0.3 519 -1.2 519 1.5 250.2 1.5z"/><path transform="translate(0 437.8)" d="M250.4 0.3L255.1 -1.5 260 -0.1 264.7 -3.5 269.6 -1.6 274.3 -6.3 279.2 -3.4 283.9 -8.2 288.8 -6 293.5 -13 298.4 -8 303.1 -16.6 308 -11.3 312.7 -20 317.6 -14.1 322.3 -22.3 327.2 -16.7 331.9 -27.1 336.8 -18.4 341.5 -28 346.4 -21 351.1 -30.9 356 -22.7 360.7 -32.9 365.6 -23.9 370.3 -33 375.2 -24.2 379.9 -32.7 384.8 -25.6 389.5 -35.3 394.4 -25.3 399.1 -33.1 404 -23.4 408.7 -33.4 413.6 -24.1 418.3 -33.4 423.2 -21.6 427.9 -30.9 432.8 -22.7 437.5 -27.6 442.4 -20 447.1 -26.5 452 -16.4 456.7 -25 461.6 -15.6 466.3 -20.2 471.2 -12.4 475.9 -16.4 480.8 -7.7 485.5 -10.7 490.4 -4.5 495.1 -6.7 500 -1.6 504.7 -2.9 509.6 -0.4 514.3 -1.6 519.2 0.6 519.2 1.5 250.4 1.5z"/><path transform="translate(0 439)" d="M260 -1.3L264.9 -0.2 269.6 -2.8 274.5 -1.9 279.2 -4.6 284.1 -4.2 288.8 -7.2 293.7 -6 298.4 -9.3 303.3 -9.7 308 -12.5 312.9 -13.5 317.6 -15.3 322.5 -16.5 327.2 -17.9 332.1 -19.8 336.8 -19.6 341.7 -22.6 346.4 -22.2 351.3 -22.7 356 -23.9 360.9 -25.7 365.6 -25.1 370.5 -24.9 375.2 -25.4 380.1 -26.1 384.8 -26.8 389.7 -27.3 394.4 -26.5 399.3 -29.9 404 -24.6 408.9 -28.8 413.6 -25.4 418.5 -27.1 423.2 -22.9 428.1 -23.8 432.8 -23.9 437.7 -21.9 442.4 -21.2 447.3 -21.5 452 -17.6 456.9 -18.6 461.6 -16.9 466.5 -13.4 471.2 -13.6 476.1 -10.1 480.8 -8.9 485.7 -5.7 490.4 -5.7 495.3 -2.2 500 -2.9 504.9 -0.8 509.6 -1.6 514.5 0.5 514.5 1.5 260 1.5z"/><path transform="translate(0 440.2)" d="M260.2 0.3L264.9 -1.4 269.8 0 274.5 -3.1 279.4 -0.9 284.1 -5.4 289 -2.7 293.7 -7.2 298.6 -4.2 303.3 -10.9 308.2 -5.9 312.9 -14.8 317.8 -9.1 322.5 -17.8 327.4 -12.1 332.1 -21.1 337 -14.1 341.7 -23.8 346.6 -16 351.3 -24 356.2 -16.8 360.9 -26.9 365.8 -18.7 370.5 -26.1 375.4 -19.5 380.1 -27.3 385 -20.3 389.7 -28.6 394.6 -20.5 399.3 -31.1 404.2 -19.2 408.9 -30 413.8 -19.2 418.5 -28.3 423.4 -19.4 428.1 -25 433 -17.2 437.7 -23.2 442.6 -15.1 447.3 -22.7 452.2 -12.8 456.9 -19.8 461.8 -10.8 466.5 -14.6 471.4 -7.3 476.1 -11.3 481 -4.3 485.7 -6.9 490.6 -1.5 495.3 -3.4 500.2 -0.5 504.9 -2 509.8 0.4 509.8 1.5 260.2 1.5z"/><path transform="translate(0 441.5)" d="M274.7 -0.1L279.4 -2.1 284.3 -1.1 289 -4 293.9 -2.8 298.6 -5.4 303.5 -5.2 308.2 -7.1 313.1 -7.4 317.8 -10.3 322.7 -10.4 327.4 -13.3 332.3 -13.2 337 -15.4 341.9 -15.8 346.6 -17.3 351.5 -17.8 356.2 -18 361.1 -17.9 365.8 -19.9 370.7 -19.3 375.4 -20.7 380.3 -22.4 385 -21.6 389.9 -21.4 394.6 -21.8 399.5 -23.1 404.2 -20.4 409.1 -21.6 413.8 -20.5 418.7 -21.3 423.4 -20.6 428.3 -19.7 433 -18.4 437.9 -17.5 442.6 -16.4 447.5 -15.5 452.2 -14 457.1 -11.5 461.8 -12 466.7 -8.7 471.4 -8.6 476.3 -4.5 481 -5.5 485.9 -2 490.6 -2.7 495.5 -0.9 500.2 -1.7 505.1 0.3 505.1 1.5 274.7 1.5z"/><path transform="translate(0 442.7)" d="M279.6 0.1L284.3 -2.3 289.2 -0.4 293.9 -4 298.8 -1.7 303.5 -6.4 308.4 -3.5 313.1 -8.7 318 -5.6 322.7 -11.6 327.6 -6.6 332.3 -14.5 337.2 -9.7 341.9 -17 346.8 -10.5 351.5 -19 356.4 -12.5 361.1 -19.1 366 -13.5 370.7 -20.6 375.6 -13.8 380.3 -23.6 385.2 -15.4 389.9 -22.6 394.8 -14.6 399.5 -24.3 404.4 -16.6 409.1 -22.8 414 -16.3 418.7 -22.5 423.6 -12.6 428.3 -20.9 433.2 -11.8 437.9 -18.7 442.8 -11.4 447.5 -16.8 452.4 -7.6 457.1 -12.8 462 -5.5 466.7 -9.9 471.6 -3.2 476.3 -5.7 481.2 -1.5 485.9 -3.2 490.8 -0.4 495.5 -2.1 500.4 0.3 500.4 1.5 279.6 1.5z"/><path transform="translate(0 443.9)" d="M284.5 0L289.2 -1.6 294.1 -0.3 298.8 -3 303.7 -1.5 308.4 -4.7 313.3 -3.4 318 -6.8 322.9 -5.4 327.6 -7.8 332.5 -7.2 337.2 -10.9 342.1 -9.2 346.8 -11.7 351.7 -10.9 356.4 -13.7 361.3 -13.7 366 -14.8 370.9 -14.1 375.6 -15 380.5 -14.4 385.2 -16.7 390.1 -15.7 394.8 -15.8 399.7 -15.6 404.4 -17.8 409.3 -14.3 414 -17.5 418.9 -14 423.6 -13.9 428.5 -13.6 433.2 -13.1 438.1 -11.6 442.8 -12.6 447.7 -8.8 452.4 -8.8 457.3 -6.1 462 -6.7 466.9 -3.3 471.6 -4.4 476.5 -1.5 481.2 -2.7 486.1 -0.6 490.8 -1.6 495.7 0.4 495.7 1.5 284.5 1.5z"/><path transform="translate(0 445.1)" d="M289.4 0.2L294.1 -1.5 299 0 303.7 -2.7 308.6 -0.6 313.3 -4.7 318.2 -1.5 322.9 -6.6 327.8 -3.1 332.5 -8.4 337.4 -4.2 342.1 -10.4 347 -5.8 351.7 -12.1 356.6 -7.2 361.3 -14.9 366.2 -7.6 370.9 -15.3 375.8 -8.7 380.5 -15.6 385.4 -9.1 390.1 -16.9 395 -9 399.7 -16.8 404.6 -10.1 409.3 -15.5 414.2 -9.5 418.9 -15.2 423.8 -7.6 428.5 -14.8 433.4 -7.4 438.1 -12.9 443 -5.6 447.7 -10 452.6 -3.8 457.3 -7.4 462.2 -1.7 466.9 -4.5 471.8 -0.9 476.5 -2.7 481.4 -0.3 486.1 -1.9 491 0.5 491 1.5 289.4 1.5z"/><path transform="translate(0 446.3)" d="M303.9 -0.1L308.6 -1.8 313.5 -0.5 318.2 -2.7 323.1 -1.2 327.8 -4.3 332.7 -2.4 337.4 -5.4 342.3 -3.9 347 -7.1 351.9 -5.5 356.6 -8.4 361.5 -7.1 366.2 -8.8 371.1 -7.3 375.8 -9.9 380.7 -8.3 385.4 -10.3 390.3 -8.3 395 -10.2 399.9 -9.1 404.6 -11.3 409.5 -8.5 414.2 -10.7 419.1 -8.5 423.8 -8.9 428.7 -6.1 433.4 -8.6 438.3 -5.2 443 -6.8 447.9 -3.1 452.6 -5 457.5 -1.8 462.2 -2.9 467.1 -1.1 471.8 -2.2 476.7 -0.2 481.4 -1.5 486.3 0.6 486.3 1.5 303.9 1.5z"/><path transform="translate(0 447.6)" d="M308.8 0.2L313.5 -1.7 318.4 -0.1 323.1 -2.5 328 -0.3 332.7 -3.6 337.6 -0.9 342.3 -5.1 347.2 -1.8 351.9 -6.7 356.8 -3.2 361.5 -8.3 366.4 -3.5 371.1 -8.5 376 -4.2 380.7 -9.5 385.6 -5 390.3 -9.5 395.2 -4.6 399.9 -10.3 404.8 -4.3 409.5 -9.7 414.4 -4.1 419.1 -9.8 424 -3.4 428.7 -7.3 433.6 -2.3 438.3 -6.4 443.2 -1.2 447.9 -4.3 452.8 -1 457.5 -3 462.4 -0.4 467.1 -2.3 472 0.2 472 1.5 308.8 1.5z"/><path transform="translate(0 448.8)" d="M323.3 -0.1L328 -1.6 332.9 -0.4 337.6 -2.1 342.5 -0.6 347.2 -3 352.1 -0.9 356.8 -4.4 361.7 -1.6 366.4 -4.7 371.3 -2.5 376 -5.4 380.9 -2.9 385.6 -6.2 390.5 -2.9 395.2 -5.9 400.1 -2.9 404.8 -5.5 409.7 -2.8 414.4 -5.3 419.3 -1.9 424 -4.6 428.9 -1.4 433.6 -3.5 438.5 -1.2 443.2 -2.4 448.1 -0.8 452.8 -2.2 457.7 -0.3 462.4 -1.6 467.3 0.4 467.3 1.5 323.3 1.5z"/><path transform="translate(0 450)" d="M328.2 0.3L332.9 -1.6 337.8 0.1 342.5 -1.8 347.4 -0.1 352.1 -2.2 357 -0.3 361.7 -2.8 366.6 -0.4 371.3 -3.8 376.2 -0.6 380.9 -4.1 385.8 -0.8 390.5 -4.1 395.4 -1 400.1 -4.2 405 -1 409.7 -4.1 414.6 -0.8 419.3 -3.2 424.2 -0.6 428.9 -2.6 433.8 -0.5 438.5 -2.4 443.4 -0.1 448.1 -2 453 0.3 457.7 -1.5 462.6 0.6 462.6 1.5 328.2 1.5z"/><path transform="translate(0 451.2)" d="M352.3 0.1L357 -1.6 361.9 -0.1 366.6 -1.7 371.5 -0.3 376.2 -1.9 381.1 -0.5 385.8 -2.1 390.7 -0.5 395.4 -2.2 400.3 -0.5 405 -2.2 409.9 -0.5 414.6 -2 419.5 -0.4 424.2 -1.8 429.1 -0.1 433.8 -1.7 438.7 0.2 438.7 1.5 352.3 1.5z"/><path transform="translate(0 452.5)" d="M366.8 0.4L371.5 -1.6 376.4 0.3 381.1 -1.7 386 0.2 390.7 -1.7 395.6 0.2 400.3 -1.7 405.2 0.2 409.9 -1.7 414.8 0.3 419.5 -1.6 424.4 0.5 424.4 1.5 366.8 1.5z"/></g>
<g fill="none" stroke-width="1.05"><path d="M32.5 407L370 490" stroke="#1c9ad6"/><path d="M370 490L645 420.5" stroke="#1ea4d4" stroke-dasharray="38 1.5 52 2 60 1.5 50 3 30 8 28 8 8"/><path d="M32.5 407L233.7 358" stroke="#1a98d8" stroke-dasharray="36 2 33 2.5 65 2 31 5 20 2 9"/><path d="M466.5 377.3L644.7 420.7" stroke="#1ea4d4" stroke-dasharray="7.3 2 5.3 2 6.2 5.2 16.7 6.3 21 2 11.6 4.2 33.7 3.1 18.9 26.2 11.5"/></g>
</g></svg>
<div class="grp" style="left:672px;top:62px;width:98px;height:378px"></div>
<div class="hd" style="top:70px;color:#222">十字線(um)</div>
<div class="lab" style="top:91px;color:#333">X</div>
<div class="fld" style="top:90.0px"></div>
<div class="lab" style="top:116px;color:#333">Y</div>
<div class="fld" style="top:115.0px"></div>
<div class="hd" style="top:143.5px;left:678px;color:#1010a8;-webkit-text-stroke:0.35px #1010a8">質心 (um)</div>
<div class="lab" style="top:165px;color:#1010a8;font-weight:bold">X</div>
<div class="fld" style="top:164.0px">436.34</div>
<div class="lab" style="top:190px;color:#1010a8;font-weight:bold">Y</div>
<div class="fld" style="top:189.0px">27.25</div>
<div class="lab" style="top:215px;color:#1010a8;font-weight:bold">R</div>
<div class="fld" style="top:214.0px">437.19</div>
<div class="hd" style="top:243px;left:677px;color:#a800b0;-webkit-text-stroke:0.35px #a800b0">兴趣区域1 (um)</div>
<div class="lab" style="top:264.4px;color:#a800b0;font-weight:bold">X</div>
<div class="fld" style="top:263.4px">512.31</div>
<div class="lab" style="top:289.4px;color:#a800b0;font-weight:bold">Y</div>
<div class="fld" style="top:288.4px">28.78</div>
<div class="lab" style="top:314.4px;color:#a800b0;font-weight:bold">R</div>
<div class="fld" style="top:313.4px">513.12</div>
<div class="hd" style="top:342.5px;left:678px;color:#08a810;-webkit-text-stroke:0.35px #08a810">兴趣区域2 (um)</div>
<div class="lab" style="top:365.1px;color:#08a810;font-weight:bold">X</div>
<div class="fld" style="top:364.1px">-700.18</div>
<div class="lab" style="top:390.4px;color:#08a810;font-weight:bold">Y</div>
<div class="fld" style="top:389.4px">-1484.29</div>
<div class="lab" style="top:415.6px;color:#08a810;font-weight:bold">R</div>
<div class="fld" style="top:414.6px">1641.15</div>
<svg class="a" style="left:0;top:0" width="1080" height="605" viewBox="0 0 1080 605" font-family="'Liberation Sans','Noto Sans CJK SC',sans-serif"><rect x="792" y="66.5" width="276" height="171.3" fill="#fff"/><line x1="793" y1="101.4" x2="1067" y2="101.4" stroke="#ff2868" stroke-width="1.15" stroke-dasharray="1.6 1.1 0.9 1.1"/><line x1="793" y1="153.5" x2="1067" y2="153.5" stroke="#38e038" stroke-width="1.15" stroke-dasharray="1.6 1.1 0.9 1.1"/><line x1="793" y1="216.6" x2="1067" y2="216.6" stroke="#2828ff" stroke-width="1.15" stroke-dasharray="1.6 1.1 0.9 1.1"/><line x1="833" y1="80.5" x2="833" y2="237.8" stroke="#222" stroke-width="1" stroke-dasharray="1.4 1.1"/><line x1="1027.6" y1="66.5" x2="1027.6" y2="237.8" stroke="#222" stroke-width="1" stroke-dasharray="1.4 1.1"/><path d="M874 237.8 874 231.6 875 228.7 876 227.9 877 228.3 878 226.8 879 224.7 880 223.4 881 221.8 882 221.2 883 220.1 884 216.9 885 217.8 886 215.7 887 215.8 888 214.9 889 212.5 890 212.9 891 212.6 892 212.5 893 210.3 894 210.1 895 207.5 896 203.6 897 206.1 898 203 899 202.6 900 202.4 901 199.7 902 197.8 903 196.8 904 192.8 905 192.6 906 191.2 907 186.5 908 182.3 909 180.5 910 180.4 911 175.4 912 173.6 913 170.1 914 167.8 915 164.1 916 160.2 917 157.2 918 154.5 919 149.4 920 148.7 921 145.3 922 142 923 140.6 924 136.3 925 134.4 926 132 927 128.4 928 126.6 929 120.7 930 122.2 931 116.7 932 113.5 933 110.3 934 107.1 935 105.1 936 101.9 937 99.1 938 96.7 939 91.8 940 89.3 941 88.4 942 84.8 943 83 944 81.2 945 78.3 946 76.4 947 69 948 67.7 949 72.3 950 73.6 951 73.3 952 68.8 953 67.8 954 69.8 955 71.5 956 73 957 68.8 958 68.5 959 74.5 960 73.5 961 68.8 962 68.7 963 72.8 964 75 965 79.5 966 80.3 967 82.7 968 84.9 969 87.2 970 88 971 91.8 972 94.4 973 97.2 974 98.5 975 102.8 976 106.1 977 108.3 978 111.5 979 115.1 980 115.3 981 119.7 982 124.9 983 127.2 984 129.2 985 133.4 986 138.8 987 139.6 988 143.7 989 147.5 990 151.5 991 154.1 992 156.7 993 160.2 994 163.1 995 167.4 996 169.9 997 171 998 173.6 999 178.6 1000 179.6 1001 182.6 1002 185.3 1003 188.5 1004 191.2 1005 195.1 1006 196.6 1007 199 1008 200.8 1009 201.5 1010 205.6 1011 207.2 1012 207.2 1013 210 1014 212 1015 215 1016 213.8 1017 214.9 1018 217.3 1019 216.8 1020 218.9 1021 221.3 1022 221.5 1023 223 1024 222.9 1025 225.7 1026 225.9 1027 224.8 1028 227.7 1029 229.4 1030 228.7 1031 229.5 1032 230.5 1033 231.7 1034 231.4 1035 232.9 1036 233.8 1037 232.9 1038 233.3 1039 233.7 1040 234 1041 234.4 1042 234.7 1043 234.9 1044 237.8" fill="none" stroke="#181818" stroke-width="0.95" stroke-linejoin="round"/><path d="M866 237.6 867 237.4 868 237.1 869 236.8 870 236.5 871 236.1 872 235.7 873 235.3 874 234.9 875 234.4 876 233.9 877 233.3 878 232.8 879 232.1 880 231.4 881 230.7 882 229.9 883 229.1 884 228.2 885 227.3 886 226.3 887 225.3 888 224.2 889 223 890 221.7 891 220.4 892 219.1 893 217.6 894 216.1 895 214.5 896 212.8 897 211 898 209.2 899 207.3 900 205.3 901 203.2 902 201 903 198.8 904 196.4 905 194 906 191.5 907 189 908 186.3 909 183.6 910 180.8 911 177.9 912 175 913 172 914 168.9 915 165.8 916 162.6 917 159.4 918 156.1 919 152.8 920 149.4 921 146 922 142.6 923 139.2 924 135.8 925 132.4 926 129 927 125.6 928 122.2 929 118.8 930 115.5 931 112.3 932 109 933 105.9 934 102.8 935 99.8 936 96.9 937 94.1 938 91.4 939 88.8 940 86.3 941 84 942 81.8 943 79.7 944 77.7 945 76 946 74.3 947 72.9 948 71.6 949 70.5 950 69.5 951 68.8 952 68.2 953 67.8 954 67.5 955 67.5 956 67.7 957 68 958 68.5 959 69.2 960 70.1 961 71.1 962 72.3 963 73.7 964 75.3 965 77 966 78.9 967 80.9 968 83.1 969 85.4 970 87.8 971 90.3 972 93 973 95.8 974 98.7 975 101.6 976 104.7 977 107.8 978 111 979 114.2 980 117.5 981 120.8 982 124.2 983 127.6 984 131 985 134.4 986 137.9 987 141.3 988 144.7 989 148.1 990 151.4 991 154.8 992 158.1 993 161.3 994 164.5 995 167.7 996 170.8 997 173.8 998 176.8 999 179.7 1000 182.5 1001 185.2 1002 187.9 1003 190.5 1004 193 1005 195.5 1006 197.9 1007 200.1 1008 202.3 1009 204.4 1010 206.5 1011 208.4 1012 210.3 1013 212.1 1014 213.8 1015 215.4 1016 217 1017 218.5 1018 219.9 1019 221.2 1020 222.5 1021 223.7 1022 224.8 1023 225.9 1024 226.9 1025 227.9 1026 228.8 1027 229.6 1028 230.4 1029 231.2 1030 231.9 1031 232.5 1032 233.1 1033 233.7 1034 234.2 1035 234.7 1036 235.2 1037 235.6 1038 236 1039 236.3 1040 236.7 1041 237 1042 237.3 1043 237.5 1044 237.8" fill="none" stroke="#ff1848" stroke-width="1"/><line x1="791.4" y1="67" x2="791.4" y2="238.3" stroke="#444" stroke-width="1.3"/><line x1="788.5" y1="237.8" x2="1068" y2="237.8" stroke="#3c3c3c" stroke-width="1.2"/><line x1="788.7" y1="220.8" x2="792" y2="220.8" stroke="#222" stroke-width="1"/><line x1="788.7" y1="203.7" x2="792" y2="203.7" stroke="#222" stroke-width="1"/><line x1="788.7" y1="186.7" x2="792" y2="186.7" stroke="#222" stroke-width="1"/><line x1="788.7" y1="169.7" x2="792" y2="169.7" stroke="#222" stroke-width="1"/><line x1="788.7" y1="152.7" x2="792" y2="152.7" stroke="#222" stroke-width="1"/><line x1="788.7" y1="135.6" x2="792" y2="135.6" stroke="#222" stroke-width="1"/><line x1="788.7" y1="118.6" x2="792" y2="118.6" stroke="#222" stroke-width="1"/><line x1="788.7" y1="101.6" x2="792" y2="101.6" stroke="#222" stroke-width="1"/><line x1="788.7" y1="84.5" x2="792" y2="84.5" stroke="#222" stroke-width="1"/><line x1="788.7" y1="67.5" x2="792" y2="67.5" stroke="#222" stroke-width="1"/><line x1="802.8" y1="234.8" x2="802.8" y2="237.8" stroke="#222" stroke-width="1"/><line x1="845.3" y1="234.8" x2="845.3" y2="237.8" stroke="#222" stroke-width="1"/><line x1="887.7" y1="234.8" x2="887.7" y2="237.8" stroke="#222" stroke-width="1"/><line x1="930.2" y1="232.8" x2="930.2" y2="237.8" stroke="#222" stroke-width="1"/><line x1="972.4" y1="234.8" x2="972.4" y2="237.8" stroke="#222" stroke-width="1"/><line x1="1014.6" y1="234.8" x2="1014.6" y2="237.8" stroke="#222" stroke-width="1"/><line x1="1057.3" y1="234.8" x2="1057.3" y2="237.8" stroke="#222" stroke-width="1"/><text x="780.2" y="70.1" font-size="9.7" text-anchor="middle" fill="#111" stroke="#111" stroke-width="0.25" letter-spacing="-0.7">100</text><text x="780.2" y="104.9" font-size="9.7" text-anchor="middle" fill="#111" stroke="#111" stroke-width="0.25" letter-spacing="-0.7">80</text><text x="780.2" y="138.9" font-size="9.7" text-anchor="middle" fill="#111" stroke="#111" stroke-width="0.25" letter-spacing="-0.7">60</text><text x="780.2" y="173" font-size="9.7" text-anchor="middle" fill="#111" stroke="#111" stroke-width="0.25" letter-spacing="-0.7">40</text><text x="780.2" y="207" font-size="9.7" text-anchor="middle" fill="#111" stroke="#111" stroke-width="0.25" letter-spacing="-0.7">20</text><text x="779.8" y="237.3" font-size="9.7" text-anchor="middle" fill="#111" stroke="#111" stroke-width="0.25" letter-spacing="-0.7">0</text><text x="780.3" y="80.1" font-size="8.2" text-anchor="middle" fill="#111" stroke="#111" stroke-width="0.25" letter-spacing="-0.4">(%)</text><text x="797" y="78" font-size="9.4" fill="#111" stroke="#111" stroke-width="0.15">水平</text><g fill="#fff" stroke="#666" stroke-width="1"><rect x="1054.5" y="69" width="7" height="6"/><rect x="1057.5" y="72.5" width="8" height="6.5"/><line x1="1054.5" y1="71" x2="1061.5" y2="71"/><line x1="1057.5" y1="74.5" x2="1065.5" y2="74.5"/></g></svg>
<svg class="a" style="left:0;top:0" width="1080" height="605" viewBox="0 0 1080 605" font-family="'Liberation Sans','Noto Sans CJK SC',sans-serif"><rect x="792" y="256.5" width="276" height="170.8" fill="#fff"/><line x1="793" y1="291.3" x2="1067" y2="291.3" stroke="#ff2868" stroke-width="1.15" stroke-dasharray="1.6 1.1 0.9 1.1"/><line x1="793" y1="343.2" x2="1067" y2="343.2" stroke="#38e038" stroke-width="1.15" stroke-dasharray="1.6 1.1 0.9 1.1"/><line x1="793" y1="406.2" x2="1067" y2="406.2" stroke="#2828ff" stroke-width="1.15" stroke-dasharray="1.6 1.1 0.9 1.1"/><line x1="833" y1="270.5" x2="833" y2="427.3" stroke="#222" stroke-width="1" stroke-dasharray="1.4 1.1"/><line x1="1027.6" y1="256.5" x2="1027.6" y2="427.3" stroke="#222" stroke-width="1" stroke-dasharray="1.4 1.1"/><path d="M825 427.3 825 423.7 826 423.2 827 422.5 828 421.4 829 420.7 830 422.4 831 420.8 832 419.7 833 422.1 834 420.8 835 418.8 836 419.6 837 419.1 838 418.3 839 417 840 415.8 841 415.4 842 414.7 843 415 844 413.1 845 415.8 846 411.2 847 412.5 848 410.2 849 410.8 850 409.1 851 406.4 852 408.3 853 406.5 854 405.5 855 404.7 856 402.8 857 400.8 858 400.2 859 401 860 397.9 861 397.2 862 396.2 863 394.1 864 394 865 392.9 866 391.8 867 388.5 868 386 869 386.6 870 382.5 871 381.6 872 380.5 873 377.6 874 375.5 875 371.9 876 369.3 877 367.5 878 364.7 879 363.6 880 359.6 881 359.7 882 356 883 353.4 884 351.1 885 348.2 886 346.9 887 344.2 888 341 889 337.1 890 337.3 891 332.7 892 328.8 893 327.4 894 323.2 895 321.6 896 317.6 897 317 898 315.1 899 311.7 900 309 901 306.1 902 303.5 903 302.4 904 299.3 905 298.3 906 294.1 907 292.7 908 291.9 909 290.1 910 287.3 911 289.1 912 283.8 913 281.2 914 281 915 277.2 916 276.7 917 274.8 918 272.1 919 270.3 920 267.2 921 259 922 259.8 923 266.5 924 262.5 925 264.3 926 259.2 927 264.8 928 259 929 265.5 930 263.8 931 258.7 932 262.1 933 259 934 262.7 935 265.6 936 261 937 262.8 938 263 939 266.4 940 266.3 941 259 942 258.8 943 268.5 944 271.4 945 273.7 946 276.6 947 278.4 948 282.6 949 284.7 950 286.1 951 289.2 952 292 953 294.6 954 295.8 955 297.3 956 298.1 957 302.2 958 300.9 959 301.8 960 304.3 961 304.4 962 305.2 963 308.1 964 308.8 965 312.6 966 314.8 967 316.3 968 319.7 969 322.9 970 326.5 971 328.4 972 332 973 333.8 974 336.4 975 340.5 976 342.2 977 344.8 978 347.4 979 348.8 980 352.2 981 355.9 982 357.2 983 358.6 984 363.8 985 365 986 367.3 987 366.5 988 368.7 989 369.6 990 373 991 373.7 992 375.9 993 376.6 994 378.6 995 382.2 996 383.1 997 383.9 998 385.5 999 387.6 1000 389.3 1001 390.6 1002 391.5 1003 393.3 1004 393.9 1005 395.1 1006 398.7 1007 399.2 1008 401.2 1009 402.7 1010 403.4 1011 405.6 1012 404.7 1013 404.9 1014 408.1 1015 408.3 1016 408.1 1017 411 1018 412.3 1019 410.7 1020 412.1 1021 413.7 1022 416.8 1023 414.7 1024 416.3 1025 418.3 1026 418.1 1027 420.8 1028 420 1029 418.7 1030 421.7 1031 419.7 1032 419.9 1033 420.9 1034 421.7 1035 419.8 1036 421 1037 423.5 1038 422 1039 422.6 1040 422.6 1041 423.6 1042 423 1043 425.2 1044 425.1 1045 424.7 1046 423.4 1047 425.9 1048 426.1 1049 424.9 1050 427.3" fill="none" stroke="#181818" stroke-width="0.95" stroke-linejoin="round"/><path d="M822 427.3 823 427.1 824 426.9 825 426.7 826 426.4 827 426.2 828 425.9 829 425.6 830 425.3 831 425 832 424.6 833 424.3 834 423.9 835 423.4 836 423 837 422.5 838 422 839 421.5 840 421 841 420.4 842 419.8 843 419.1 844 418.4 845 417.7 846 417 847 416.2 848 415.3 849 414.5 850 413.6 851 412.6 852 411.6 853 410.6 854 409.5 855 408.3 856 407.1 857 405.9 858 404.6 859 403.3 860 401.9 861 400.5 862 399 863 397.4 864 395.8 865 394.2 866 392.5 867 390.7 868 388.9 869 387 870 385.1 871 383.1 872 381.1 873 379 874 376.9 875 374.7 876 372.5 877 370.2 878 367.8 879 365.5 880 363 881 360.6 882 358.1 883 355.5 884 353 885 350.3 886 347.7 887 345 888 342.3 889 339.6 890 336.9 891 334.1 892 331.4 893 328.6 894 325.8 895 323 896 320.3 897 317.5 898 314.7 899 312 900 309.3 901 306.6 902 303.9 903 301.3 904 298.7 905 296.1 906 293.6 907 291.2 908 288.8 909 286.4 910 284.1 911 281.9 912 279.8 913 277.7 914 275.8 915 273.9 916 272.1 917 270.3 918 268.7 919 267.2 920 265.8 921 264.5 922 263.3 923 262.2 924 261.2 925 260.3 926 259.5 927 258.9 928 258.4 929 258 930 257.7 931 257.5 932 257.5 933 257.6 934 257.8 935 258.1 936 258.6 937 259.1 938 259.8 939 260.6 940 261.5 941 262.6 942 263.7 943 265 944 266.3 945 267.8 946 269.4 947 271 948 272.8 949 274.6 950 276.5 951 278.6 952 280.6 953 282.8 954 285 955 287.4 956 289.7 957 292.1 958 294.6 959 297.1 960 299.7 961 302.3 962 305 963 307.7 964 310.4 965 313.1 966 315.8 967 318.6 968 321.4 969 324.1 970 326.9 971 329.7 972 332.5 973 335.2 974 338 975 340.7 976 343.4 977 346.1 978 348.8 979 351.4 980 354 981 356.6 982 359.1 983 361.6 984 364 985 366.4 986 368.8 987 371.1 988 373.4 989 375.6 990 377.7 991 379.8 992 381.9 993 383.9 994 385.9 995 387.8 996 389.6 997 391.4 998 393.2 999 394.8 1000 396.5 1001 398 1002 399.6 1003 401 1004 402.5 1005 403.8 1006 405.1 1007 406.4 1008 407.6 1009 408.8 1010 409.9 1011 411 1012 412 1013 413 1014 413.9 1015 414.8 1016 415.7 1017 416.5 1018 417.3 1019 418 1020 418.7 1021 419.4 1022 420 1023 420.6 1024 421.2 1025 421.7 1026 422.2 1027 422.7 1028 423.2 1029 423.6 1030 424 1031 424.4 1032 424.8 1033 425.1 1034 425.4 1035 425.7 1036 426 1037 426.3 1038 426.5 1039 426.8 1040 427 1041 427.2" fill="none" stroke="#ff1848" stroke-width="1"/><line x1="791.4" y1="257" x2="791.4" y2="427.8" stroke="#444" stroke-width="1.3"/><line x1="788.5" y1="427.3" x2="1068" y2="427.3" stroke="#3c3c3c" stroke-width="1.2"/><line x1="788.7" y1="410.3" x2="792" y2="410.3" stroke="#222" stroke-width="1"/><line x1="788.7" y1="393.3" x2="792" y2="393.3" stroke="#222" stroke-width="1"/><line x1="788.7" y1="376.4" x2="792" y2="376.4" stroke="#222" stroke-width="1"/><line x1="788.7" y1="359.4" x2="792" y2="359.4" stroke="#222" stroke-width="1"/><line x1="788.7" y1="342.4" x2="792" y2="342.4" stroke="#222" stroke-width="1"/><line x1="788.7" y1="325.4" x2="792" y2="325.4" stroke="#222" stroke-width="1"/><line x1="788.7" y1="308.4" x2="792" y2="308.4" stroke="#222" stroke-width="1"/><line x1="788.7" y1="291.5" x2="792" y2="291.5" stroke="#222" stroke-width="1"/><line x1="788.7" y1="274.5" x2="792" y2="274.5" stroke="#222" stroke-width="1"/><line x1="788.7" y1="257.5" x2="792" y2="257.5" stroke="#222" stroke-width="1"/><line x1="881" y1="424.3" x2="881" y2="427.3" stroke="#222" stroke-width="1"/><line x1="930.3" y1="422.3" x2="930.3" y2="427.3" stroke="#222" stroke-width="1"/><line x1="978" y1="424.3" x2="978" y2="427.3" stroke="#222" stroke-width="1"/><text x="780.2" y="260.1" font-size="9.7" text-anchor="middle" fill="#111" stroke="#111" stroke-width="0.25" letter-spacing="-0.7">100</text><text x="780.2" y="294.8" font-size="9.7" text-anchor="middle" fill="#111" stroke="#111" stroke-width="0.25" letter-spacing="-0.7">80</text><text x="780.2" y="328.7" font-size="9.7" text-anchor="middle" fill="#111" stroke="#111" stroke-width="0.25" letter-spacing="-0.7">60</text><text x="780.2" y="362.7" font-size="9.7" text-anchor="middle" fill="#111" stroke="#111" stroke-width="0.25" letter-spacing="-0.7">40</text><text x="780.2" y="396.6" font-size="9.7" text-anchor="middle" fill="#111" stroke="#111" stroke-width="0.25" letter-spacing="-0.7">20</text><text x="779.8" y="426.8" font-size="9.7" text-anchor="middle" fill="#111" stroke="#111" stroke-width="0.25" letter-spacing="-0.7">0</text><text x="780.3" y="270.1" font-size="8.2" text-anchor="middle" fill="#111" stroke="#111" stroke-width="0.25" letter-spacing="-0.4">(%)</text><text x="797" y="268" font-size="9.4" fill="#111" stroke="#111" stroke-width="0.15">立式</text><g fill="#fff" stroke="#666" stroke-width="1"><rect x="1054.5" y="259" width="7" height="6"/><rect x="1057.5" y="262.5" width="8" height="6.5"/><line x1="1054.5" y1="261" x2="1061.5" y2="261"/><line x1="1057.5" y1="264.5" x2="1065.5" y2="264.5"/></g></svg>
<div class="xl" style="left:791.5px;top:238.3px;width:39.8px">-2091.61</div>
<div class="xl" style="left:1027.1px;top:238.3px;width:39.6px">2091.61</div>
<div class="xl" style="left:791.5px;top:427.8px;width:39.8px">-1676.60</div>
<div class="xl" style="left:1026px;top:427.8px;width:40.8px">1668.30</div>
<div class="grp" style="left:791px;top:446px;width:275.5px;height:133.5px"></div>
<div class="t" style="left:837px;top:452px;font-weight:bold;font-size:10px;line-height:11px;color:#111">水平</div>
<div class="t" style="left:838px;top:463px;font-weight:bold;font-size:10px;line-height:11px;color:#111">寬度</div>
<div class="t" style="left:870px;top:463px;font-weight:bold;font-size:10px;line-height:11px;color:#111;font-size:10.6px">(um)</div>
<div class="t" style="left:970px;top:452px;font-weight:bold;font-size:10px;line-height:11px;color:#111">立式</div>
<div class="t" style="left:970px;top:463px;font-weight:bold;font-size:10px;line-height:11px;color:#111">寬度</div>
<div class="t" style="left:1001px;top:463px;font-weight:bold;font-size:10px;line-height:11px;color:#111;font-size:10.6px">(um)</div>
<div class="t" style="left:833px;top:480px;font-weight:bold;font-size:10px;line-height:11px;color:#111">束</div>
<div class="t" style="left:876px;top:480px;font-weight:bold;font-size:10px;line-height:11px;color:#111;color:#7a1010">高斯</div>
<div class="t" style="left:968px;top:480px;font-weight:bold;font-size:10px;line-height:11px;color:#111">束</div>
<div class="t" style="left:1012px;top:480px;font-weight:bold;font-size:10px;line-height:11px;color:#111;color:#7a1010">高斯</div>
<div class="vb" style="left:813px;top:493.5px">838.53</div>
<div class="vb" style="left:863px;top:493.5px;color:#7a1010">875.97</div>
<div class="pc" style="top:492.5px">80.0%</div>
<div class="vb" style="left:950px;top:493.5px">783.77</div>
<div class="vb" style="left:1000px;top:493.5px;color:#7a1010">867.33</div>
<div class="vb" style="left:813px;top:512.5px">1543.20</div>
<div class="vb" style="left:863px;top:512.5px;color:#7a1010">1543.87</div>
<div class="pc" style="top:511.5px">50.0%</div>
<div class="vb" style="left:950px;top:512.5px">1525.24</div>
<div class="vb" style="left:1000px;top:512.5px;color:#7a1010">1528.63</div>
<div class="vb" style="left:813px;top:531.5px">2776.36</div>
<div class="vb" style="left:863px;top:531.5px;color:#7a1010">2624.12</div>
<div class="pc" style="top:530.5px">13.5%</div>
<div class="vb" style="left:950px;top:531.5px">2727.64</div>
<div class="vb" style="left:1000px;top:531.5px;color:#7a1010">2598.21</div>
<div class="t" style="left:849px;top:552px;color:#1818c0;font-size:10px;line-height:11px;-webkit-text-stroke:0.2px #1818c0">95.49</div>
<div class="t" style="left:910px;top:552px;color:#1818c0;font-size:10px;line-height:11px;-webkit-text-stroke:0.2px #1818c0">Corr. (%)</div>
<div class="t" style="left:985px;top:552px;color:#1818c0;font-size:10px;line-height:11px;-webkit-text-stroke:0.2px #1818c0">95.74</div>
<div class="a" style="left:4px;top:567px;width:131px;height:34px;background:#fff;overflow:hidden"><svg class="a" style="left:0;top:0" width="131" height="34" viewBox="0 0 131 34"><defs><radialGradient id="lg" cx="0.5" cy="0.5" r="0.5"><stop offset="0" stop-color="#ff4030"/><stop offset="0.3" stop-color="#f00808"/><stop offset="0.65" stop-color="#b80000"/><stop offset="0.9" stop-color="#400000"/><stop offset="1" stop-color="#000"/></radialGradient></defs><circle cx="1.5" cy="17.5" r="14.2" fill="#000"/><circle cx="1.5" cy="17.5" r="13.5" fill="url(#lg)"/><g stroke="#1a0000" stroke-width="0.6" opacity="0.6"><line x1="1.9" y1="13.5" x2="3.0" y2="3.6"/><line x1="2.7" y1="13.7" x2="5.8" y2="4.2"/><line x1="3.5" y1="14.0" x2="8.5" y2="5.4"/><line x1="4.2" y1="14.5" x2="10.9" y2="7.1"/><line x1="4.7" y1="15.1" x2="12.8" y2="9.3"/><line x1="5.2" y1="15.9" x2="14.3" y2="11.8"/><line x1="5.4" y1="16.7" x2="15.2" y2="14.6"/><line x1="5.5" y1="17.5" x2="15.5" y2="17.5"/><line x1="5.4" y1="18.3" x2="15.2" y2="20.4"/><line x1="5.2" y1="19.1" x2="14.3" y2="23.2"/><line x1="4.7" y1="19.9" x2="12.8" y2="25.7"/><line x1="4.2" y1="20.5" x2="10.9" y2="27.9"/><line x1="3.5" y1="21.0" x2="8.5" y2="29.6"/><line x1="2.7" y1="21.3" x2="5.8" y2="30.8"/><line x1="1.9" y1="21.5" x2="3.0" y2="31.4"/></g><rect x="2" y="17" width="129" height="0.9" fill="#f01818"/></svg><div class="t" style="left:18px;top:7px;font-family:'Liberation Serif',serif;font-weight:bold;font-size:8.1px;line-height:9px;color:#222;letter-spacing:-0.62px;word-spacing:0.8px">DUMA OPTRONICS LTD.</div><div class="t" style="left:27px;top:17.3px;font-family:'Liberation Serif',serif;font-weight:bold;font-style:italic;font-size:6.4px;line-height:7px;color:#111;letter-spacing:-0.24px">Innovative Optronics Instrumentation</div></div>
<div class="tk" style="left:83.1px;top:567px;width:1px;height:2.5px"></div>
<div class="sb" style="left:137px;width:104.0px">2021-04-15 17:54:44</div>
<div class="sb" style="left:243px;width:61.0px">Average: Off</div>
<div class="sb" style="left:307px;width:172.0px">Zoom: 100%&nbsp; Scale: 500.0 um/div</div>
<div class="sb" style="left:481px;width:85.0px">Power:&nbsp; -----</div>
<div class="sb" style="left:568px;width:46.0px;color:#747474;-webkit-text-stroke:0.2px #747474">Null: Off</div>
<div class="sb" style="left:617px;width:45.0px">OBR: Off</div>
<div class="sb" style="left:665px;width:103.5px">Profiles: Sum</div>
<div class="sb" style="left:771px;width:303.0px"></div>
<svg class="a" style="left:668px;top:528.5px" width="52" height="56" viewBox="0 0 52 50" preserveAspectRatio="none"><g fill="#fff" stroke="#b8b8b8" stroke-width="0.6"><path d="M19 6C10.5 6 4 11.5 4 18.5c0 4 2.2 7.4 5.6 9.7L8 33l5.6-2.9c1.7.5 3.5.8 5.4.8.6 0 1.200 0 1.800-.1C20.300 29.600 20 28.300 20 27c0-6.600 6.200-11.800 13.800-11.800.300 0 .6 0 .9 0C33.400 9.900 26.900 6 19 6z"/><path d="M48 27.500c0-5.800-5.700-10.400-12.700-10.400S22.600 21.700 22.600 27.500s5.700 10.400 12.700 10.400c1.500 0 3-.2 4.300-.6L44.200 40l-1.300-4.200C46 33.900 48 30.900 48 27.500z"/></g><g fill="#c8c8c8"><circle cx="14" cy="14.5" r="1.7"/><circle cx="24" cy="14.5" r="1.7"/><circle cx="31" cy="24.500" r="1.5"/><circle cx="39.500" cy="24.500" r="1.5"/></g></svg>
<div class="t" style="left:720px;top:543.2px;font-size:27px;line-height:30px;color:#fff;font-family:'Liberation Sans','Noto Sans CJK SC',sans-serif;font-weight:400;transform:skewX(-6deg);transform-origin:0 100%;text-shadow:1px 1px 0.8px #484848,0 0 1px #999">上海筱晓光子技术有限公司</div>
</body></html>
